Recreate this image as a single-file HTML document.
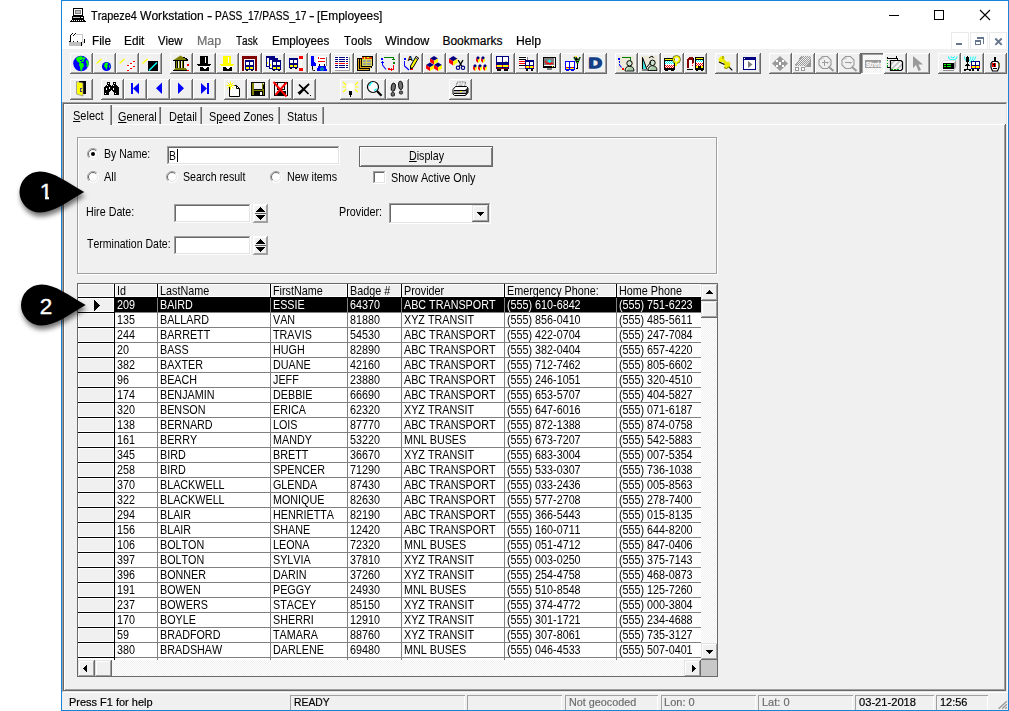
<!DOCTYPE html><html><head><meta charset="utf-8"><title>Trapeze4 Workstation</title><style>
*{box-sizing:border-box;margin:0;padding:0}
html,body{width:1009px;height:711px;overflow:hidden;background:#fff}
body{position:relative;font-family:"Liberation Sans",sans-serif;color:#000;font-kerning:none}
.a{position:absolute}
#win{left:61px;top:0;width:948px;height:711px;border:1px solid #1883d7;background:#f0f0f0}
#cap{left:62px;top:1px;width:946px;height:48px;background:#fff}
.seg{font-size:12px;line-height:14px;white-space:nowrap;transform-origin:0 0;-webkit-text-stroke:.2px currentColor}
.ms{font-size:13px;line-height:15px;white-space:nowrap;transform-origin:0 0}
.ar{font-size:11px;line-height:13px;white-space:nowrap;transform-origin:0 0;-webkit-text-stroke:.2px currentColor}
u{text-decoration:underline;text-underline-offset:1px;text-decoration-thickness:1px}
.tb{width:23px;height:21px;box-shadow:inset -1px -1px 0 #696969,inset 1px 1px 0 #fff,inset -2px -2px 0 #a0a0a0}
.tb>svg{position:absolute;left:0;top:0;width:23px;height:21px;overflow:hidden}
.tb.dn{box-shadow:inset -1px -1px 0 #fff,inset 1px 1px 0 #696969,inset 2px 2px 0 #a0a0a0}
.sunk{background:#fff;box-shadow:inset -1px -1px 0 #fff,inset 1px 1px 0 #a0a0a0,inset -2px -2px 0 #e3e3e3,inset 2px 2px 0 #696969}
.btn3{background:#f0f0f0;box-shadow:inset -1px -1px 0 #696969,inset 1px 1px 0 #e3e3e3,inset -2px -2px 0 #a0a0a0,inset 2px 2px 0 #fff}
.radio{width:12px;height:12px;border-radius:50%;background:#fff;box-shadow:inset 1px 1px 0 #a0a0a0,inset 2px 2px 0 #696969,inset -1px -1px 0 #fff,inset -2px -2px 0 #e3e3e3}
.dith{background:conic-gradient(#fff 25%,#f0f0f0 0 50%,#fff 0 75%,#f0f0f0 0) 0 0/2px 2px}
.pane{top:695px;height:15px;box-shadow:inset 1px 1px 0 #a0a0a0,inset -1px 0 0 #fff}
.hc{background:#f0f0f0;box-shadow:inset 1px 1px 0 #fff,inset -1px -1px 0 #fff}
.gl{background:#808080}
.bl{background:#000}
.cell{height:14px;overflow:hidden}
</style></head><body><div id="win" class="a"></div><div id="cap" class="a"></div>
<svg class="a" style="left:69px;top:7px" width="18" height="16" viewBox="0 0 18 16" shape-rendering="crispEdges"><rect x="4" y="1" width="10" height="8" fill="#000"/><rect x="5" y="2" width="8" height="6" fill="#fff"/><rect x="6" y="3" width="6" height="4" fill="#808080"/><rect x="7" y="4" width="4" height="2" fill="#c0c0c0"/><rect x="3" y="9" width="12" height="3" fill="#000"/><rect x="4" y="10" width="7" height="1" fill="#c0c0c0"/><rect x="12" y="10" width="2" height="1" fill="#fff"/><rect x="3" y="12" width="12" height="1" fill="#000"/><rect x="2" y="13" width="14" height="1" fill="#000"/><rect x="1" y="14" width="16" height="1" fill="#000"/><rect x="3" y="13" width="1" height="1" fill="#fff"/><rect x="5" y="13" width="1" height="1" fill="#fff"/><rect x="7" y="13" width="1" height="1" fill="#fff"/><rect x="9" y="13" width="1" height="1" fill="#fff"/><rect x="11" y="13" width="1" height="1" fill="#fff"/><rect x="13" y="13" width="1" height="1" fill="#fff"/></svg>
<div class="a seg" style="left:91.46px;top:9px;transform:scaleX(0.9047);">Trapeze4</div>
<div class="a seg" style="left:140.25px;top:9px;transform:scaleX(1.0061);">Workstation</div>
<div class="a seg" style="left:207.39px;top:9px;transform:scaleX(1.3312);">-</div>
<div class="a seg" style="left:215.16px;top:9px;transform:scaleX(0.8514);">PASS_17/PASS_17</div>
<div class="a seg" style="left:308.95px;top:9px;transform:scaleX(1.3995);">-</div>
<div class="a seg" style="left:316.85px;top:9px;transform:scaleX(0.9904);">[Employees]</div>
<svg class="a" style="left:880px;top:1px" width="128" height="30" viewBox="880 1 128 30" shape-rendering="crispEdges" fill="none" stroke="#000" stroke-width="1"><path d="M889 15.5h10"/><rect x="934.5" y="10.5" width="9" height="9"/></svg>
<svg class="a" style="left:978px;top:8px" width="14" height="14" viewBox="978 8 14 14" fill="none" stroke="#000" stroke-width="1.1"><path d="M980 10l10 10M990 10l-10 10"/></svg>
<svg class="a" style="left:0;top:0" width="100" height="50" viewBox="0 0 100 50" shape-rendering="crispEdges"><rect x="70" y="35" width="1" height="7" fill="#000"/><rect x="69" y="41" width="2" height="1" fill="#000"/><rect x="71" y="34" width="1" height="1" fill="#000"/><rect x="72" y="33" width="1" height="1" fill="#000"/><rect x="73" y="35" width="1" height="1" fill="#000"/><rect x="74" y="34" width="1" height="1" fill="#000"/><rect x="75" y="33" width="1" height="1" fill="#000"/><rect x="73" y="41" width="1" height="1" fill="#000"/><rect x="77" y="41" width="1" height="1" fill="#000"/><rect x="76" y="34" width="7" height="1" fill="#c8c8c8"/><rect x="82" y="34" width="1" height="8" fill="#c8c8c8"/><rect x="69" y="42" width="12" height="4" fill="#c0c0c0"/><rect x="81" y="42" width="1" height="4" fill="#000"/><rect x="84" y="39" width="1" height="4" fill="#000"/><rect x="82" y="42" width="1" height="3" fill="#dcdcdc"/><rect x="83" y="41" width="1" height="3" fill="#dcdcdc"/></svg>
<div class="a seg mn" style="left:91.53px;top:34px;transform:scaleX(0.9821);">File</div>
<div class="a seg mn" style="left:123.53px;top:34px;transform:scaleX(0.9844);">Edit</div>
<div class="a seg mn" style="left:157.95px;top:34px;transform:scaleX(0.9428);">View</div>
<div class="a seg mn" style="left:196.98px;top:34px;transform:scaleX(1.0341);color:#6d6d6d;">Map</div>
<div class="a seg mn" style="left:235.77px;top:34px;transform:scaleX(0.8349);">Task</div>
<div class="a seg mn" style="left:272.05px;top:34px;transform:scaleX(0.9647);">Employees</div>
<div class="a seg mn" style="left:343.54px;top:34px;transform:scaleX(0.9567);">Tools</div>
<div class="a seg mn" style="left:384.75px;top:34px;transform:scaleX(1.0385);">Window</div>
<div class="a seg mn" style="left:442.42px;top:34px;transform:scaleX(1.0000);">Bookmarks</div>
<div class="a seg mn" style="left:516.00px;top:34px;transform:scaleX(1.0176);">Help</div>
<div class="a " style="left:951px;top:32px;width:18px;height:18px;background:#fff;border:1px solid #e9e9e9"></div>
<div class="a " style="left:970px;top:32px;width:18px;height:18px;background:#fff;border:1px solid #e9e9e9"></div>
<div class="a " style="left:989px;top:32px;width:18px;height:18px;background:#fff;border:1px solid #e9e9e9"></div>
<svg class="a" style="left:951px;top:32px" width="56" height="18" viewBox="951 32 56 18" shape-rendering="crispEdges"><rect x="956" y="43" width="6" height="2" fill="#66768c"/><path d="M977.5 38.500h6v5" stroke="#66768c" fill="none"/><rect x="977" y="37" width="7" height="2" fill="#66768c"/><rect x="975.500" y="41.500" width="5" height="3" stroke="#66768c" fill="#fff"/><rect x="975" y="40" width="6" height="2" fill="#66768c"/></svg>
<svg class="a" style="left:993px;top:36px" width="11" height="11" viewBox="993 36 11 11" fill="none" stroke="#66768c" stroke-width="1.9"><path d="M995.300 38.500l6.400 6.400M1001.700 38.500l-6.400 6.400"/></svg>
<div class="a tb" style="left:70px;top:53px"><svg viewBox="0 0 23 21"><circle cx="11" cy="10.500" r="7.800" fill="#0000ff"/><path d="M6 5.500L8.500 3.600L12 3.300L13 5L14 4L15.500 5L14 7L13.200 9L11.500 8.500L11 10L13 10L13.500 11L14 13L12.500 15L12 17.800L10.500 17.800L10 14L9 12L9.500 10L8 9L6.500 7.500z" fill="#00ff00" /><path d="M16.500 6.500L18 8L18.800 10.500L18 13.500L16.500 14L16.800 11L16 9z" fill="#00ff00" /><g shape-rendering="crispEdges"><rect x="12" y="6" width="1" height="1" fill="#0000ff"/><rect x="10" y="7" width="2" height="1" fill="#0000ff"/></g></svg></div>
<div class="a tb" style="left:93px;top:53px"><svg viewBox="0 0 23 21"><path d="M3.500 10.500L8.500 6" fill="none" stroke="#ffff00" stroke-width="1.2" /><g shape-rendering="crispEdges"><rect x="9" y="4" width="1" height="1" fill="#fff"/><rect x="11" y="3" width="1" height="1" fill="#fff"/><rect x="12" y="5" width="1" height="1" fill="#fff"/><rect x="10" y="6" width="1" height="1" fill="#fff"/><rect x="13" y="4" width="1" height="1" fill="#fff"/></g><circle cx="13.500" cy="13.500" r="4.600" fill="#0000ff"/><path d="M12 10l2.500-.5 1 1.500-1.500 1 1 1.500-1 1 0 2.500-1.500-2-1.500-2zM16.500 11.500l1 1.500-.5 2-1-1z" fill="#00ff00" /></svg></div>
<div class="a tb" style="left:116px;top:53px"><svg viewBox="0 0 23 21"><path d="M3.500 10.500L8.500 6" fill="none" stroke="#ffff00" stroke-width="1.2" /><g shape-rendering="crispEdges"><rect x="9" y="4" width="1" height="1" fill="#fff"/><rect x="11" y="3" width="1" height="1" fill="#fff"/><rect x="12" y="5" width="1" height="1" fill="#fff"/><rect x="10" y="6" width="1" height="1" fill="#fff"/><rect x="13" y="4" width="1" height="1" fill="#fff"/></g><path d="M11 13l7-4.500v4l-7 4.500z" fill="#fff" /><g shape-rendering="crispEdges"><rect x="11" y="12" width="2" height="1" fill="#ff0000"/><rect x="14" y="10" width="2" height="1" fill="#ff0000"/><rect x="17" y="8" width="2" height="1" fill="#ff0000"/><rect x="11" y="17" width="2" height="1" fill="#ff0000"/><rect x="14" y="15" width="2" height="1" fill="#ff0000"/><rect x="17" y="13" width="2" height="1" fill="#ff0000"/></g></svg></div>
<div class="a tb" style="left:139px;top:53px"><svg viewBox="0 0 23 21"><path d="M3.500 10.500L8.500 6" fill="none" stroke="#ffff00" stroke-width="1.2" /><g shape-rendering="crispEdges"><rect x="9" y="4" width="1" height="1" fill="#fff"/><rect x="11" y="3" width="1" height="1" fill="#fff"/><rect x="12" y="5" width="1" height="1" fill="#fff"/><rect x="10" y="6" width="1" height="1" fill="#fff"/><rect x="13" y="4" width="1" height="1" fill="#fff"/></g><g shape-rendering="crispEdges"><rect x="9" y="8" width="10" height="10" fill="#000"/></g><path d="M10 17.500L18 9.500" fill="none" stroke="#00ffff" stroke-width="1.5" /></svg></div>
<div class="a tb" style="left:170px;top:53px"><svg viewBox="0 0 23 21"><path d="M10.500 2.500L17.500 7H3.500z" fill="#808000" /><g shape-rendering="crispEdges"><rect x="3" y="7" width="15" height="1" fill="#000"/><rect x="13" y="4" width="2" height="1" fill="#000"/><rect x="15" y="5" width="2" height="1" fill="#000"/><rect x="16" y="6" width="2" height="1" fill="#000"/><rect x="5" y="8" width="11" height="7" fill="#f4f4e8"/><rect x="6" y="8" width="1" height="7" fill="#808000"/><rect x="7" y="8" width="1" height="7" fill="#000"/><rect x="9" y="8" width="1" height="7" fill="#808000"/><rect x="10" y="8" width="1" height="7" fill="#000"/><rect x="12" y="8" width="1" height="7" fill="#808000"/><rect x="13" y="8" width="1" height="7" fill="#000"/><rect x="5" y="8" width="1" height="7" fill="#000"/><rect x="5" y="15" width="11" height="1" fill="#808000"/><rect x="4" y="16" width="13" height="1" fill="#808000"/><rect x="3" y="17" width="15" height="1" fill="#000"/><rect x="17" y="11" width="2" height="2" fill="#ff0000"/><rect x="17" y="17" width="2" height="1" fill="#ff0000"/></g></svg></div>
<div class="a tb" style="left:193px;top:53px"><svg viewBox="0 0 23 21"><g shape-rendering="crispEdges"><rect x="7" y="3" width="8" height="8" fill="#000"/><rect x="12" y="4" width="1" height="6" fill="#fff"/><rect x="4" y="11" width="14" height="1" fill="#000"/><rect x="5" y="12" width="12" height="1" fill="#000"/><rect x="6" y="13" width="11" height="2" fill="#fff"/><rect x="9" y="15" width="5" height="2" fill="#fff"/><path d="M7 14h2l2.500 2.500 2.500-2.500h2v4h-9z" fill="#000" /></g></svg></div>
<div class="a tb" style="left:216px;top:53px"><svg viewBox="0 0 23 21"><g shape-rendering="crispEdges"><rect x="7" y="3" width="8" height="8" fill="#ffff00"/><rect x="12" y="4" width="1" height="6" fill="#fff"/><rect x="4" y="11" width="14" height="1" fill="#ffff00"/><rect x="5" y="12" width="12" height="1" fill="#ffff00"/><rect x="6" y="13" width="11" height="2" fill="#fff"/><rect x="9" y="15" width="5" height="2" fill="#fff"/><path d="M7 14h2l2.500 2.500 2.500-2.500h2v4h-9z" fill="#000" /></g></svg></div>
<div class="a tb" style="left:239px;top:53px"><svg viewBox="0 0 23 21"><g shape-rendering="crispEdges"><rect x="3" y="3" width="15" height="15" fill="#800000"/><rect x="5" y="6" width="11" height="12" fill="#f0f0f0"/><rect x="6" y="7" width="9" height="10" fill="#000080"/><rect x="7" y="9" width="3.0" height="3.0" fill="#fff"/><rect x="11.0" y="9" width="3.0" height="3.0" fill="#fff"/><rect x="7" y="14" width="3.0" height="2" fill="#ffff00"/><rect x="11.0" y="14" width="3.0" height="2" fill="#ffff00"/><rect x="7" y="17" width="2" height="1" fill="#000"/><rect x="12" y="17" width="2" height="1" fill="#000"/></g></svg></div>
<div class="a tb" style="left:262px;top:53px"><svg viewBox="0 0 23 21"><g shape-rendering="crispEdges"><rect x="4" y="3" width="9" height="11" fill="#000080"/><rect x="5" y="5" width="2" height="8" fill="#fff"/><rect x="5" y="9" width="1" height="2" fill="#ffff00"/><rect x="7" y="5" width="9" height="11" fill="#000080"/><rect x="8" y="7" width="2" height="8" fill="#fff"/><rect x="8" y="11" width="1" height="2" fill="#ffff00"/><rect x="10" y="7" width="9" height="10" fill="#000080"/><rect x="11" y="9" width="3.0" height="3.0" fill="#fff"/><rect x="15.0" y="9" width="3.0" height="3.0" fill="#fff"/><rect x="11" y="14" width="3.0" height="2" fill="#ffff00"/><rect x="15.0" y="14" width="3.0" height="2" fill="#ffff00"/><rect x="11" y="17" width="2" height="1" fill="#000"/><rect x="16" y="17" width="2" height="1" fill="#000"/></g></svg></div>
<div class="a tb" style="left:285px;top:53px"><svg viewBox="0 0 23 21"><g shape-rendering="crispEdges"><rect x="14" y="3" width="4" height="3" fill="#ff0000"/><rect x="14" y="15" width="4" height="3" fill="#ff0000"/><rect x="14" y="6" width="3" height="9" fill="#fff"/><rect x="4" y="5" width="9" height="10" fill="#000080"/><rect x="5" y="7" width="3.0" height="3.0" fill="#fff"/><rect x="9.0" y="7" width="3.0" height="3.0" fill="#fff"/><rect x="5" y="12" width="3.0" height="2" fill="#ffff00"/><rect x="9.0" y="12" width="3.0" height="2" fill="#ffff00"/><rect x="5" y="15" width="2" height="1" fill="#000"/><rect x="10" y="15" width="2" height="1" fill="#000"/></g></svg></div>
<div class="a tb" style="left:308px;top:53px"><svg viewBox="0 0 23 21"><g shape-rendering="crispEdges"><rect x="8" y="3" width="11" height="10" fill="#fff"/><rect x="18" y="4" width="1" height="9" fill="#808080"/><rect x="3" y="3" width="3" height="10" fill="#0000ff"/><path d="M6 9l2 2v2h-2z" fill="#0000ff" /><rect x="10" y="4" width="1" height="2" fill="#ff0000"/><rect x="12" y="5" width="5" height="1" fill="#ff0000"/><rect x="10" y="8" width="7" height="1" fill="#ff0000"/><rect x="11" y="11" width="1" height="2" fill="#000"/><rect x="16" y="11" width="1" height="2" fill="#000"/><path d="M10 13h8l1 5h-10z" fill="#0000ff" /></g><path d="M4.500 13v3.500q0 1 1 1h1.500" fill="none" stroke="#000" stroke-width="1" /><circle cx="14" cy="16" r="1.800" fill="#00c0c0"/><circle cx="14" cy="16" r=".8" fill="#004040"/></svg></div>
<div class="a tb" style="left:331px;top:53px"><svg viewBox="0 0 23 21"><g shape-rendering="crispEdges"><rect x="3" y="3" width="15" height="14" fill="#fff"/><rect x="18" y="4" width="1" height="14" fill="#a0a0a0"/><rect x="4" y="17" width="15" height="1" fill="#a0a0a0"/><rect x="4" y="4" width="3" height="1" fill="#000080"/><rect x="8" y="4" width="6" height="1" fill="#000080"/><rect x="15" y="4" width="2" height="1" fill="#000080"/><rect x="4" y="6" width="3" height="1" fill="#000080"/><rect x="8" y="6" width="6" height="1" fill="#000080"/><rect x="15" y="6" width="2" height="1" fill="#000080"/><rect x="4" y="8" width="3" height="1" fill="#000080"/><rect x="8" y="8" width="6" height="1" fill="#000080"/><rect x="15" y="8" width="2" height="1" fill="#000080"/><rect x="4" y="10" width="3" height="1" fill="#ff0000"/><rect x="8" y="10" width="6" height="1" fill="#ff0000"/><rect x="15" y="10" width="2" height="1" fill="#ff0000"/><rect x="4" y="12" width="3" height="1" fill="#000080"/><rect x="8" y="12" width="6" height="1" fill="#000080"/><rect x="15" y="12" width="2" height="1" fill="#000080"/><rect x="4" y="14" width="3" height="1" fill="#000080"/><rect x="8" y="14" width="6" height="1" fill="#000080"/><rect x="15" y="14" width="2" height="1" fill="#000080"/></g></svg></div>
<div class="a tb" style="left:354px;top:53px"><svg viewBox="0 0 23 21"><g shape-rendering="crispEdges"><path d="M3 5h5v-2h11v10h-1v2h-2v3h-13z" fill="#000" /><rect x="4" y="6" width="1" height="11" fill="#daa520"/><rect x="4" y="16" width="11" height="1" fill="#daa520"/><rect x="6" y="6" width="1" height="9" fill="#daa520"/><rect x="6" y="14" width="11" height="1" fill="#daa520"/><rect x="8" y="4" width="10" height="9" fill="#d8d850"/><rect x="8" y="4" width="10" height="2" fill="#e04000"/><rect x="10" y="4" width="1" height="2" fill="#ffff00"/><rect x="13" y="4" width="2" height="1" fill="#ffff00"/><rect x="9" y="7" width="3" height="5" fill="#a0a0a0"/><rect x="13" y="7" width="4" height="5" fill="#a0a0a0"/><rect x="9" y="9" width="8" height="1" fill="#d8d850"/></g></svg></div>
<div class="a tb" style="left:377px;top:53px"><svg viewBox="0 0 23 21"><g shape-rendering="crispEdges"><rect x="4" y="5" width="2" height="2" fill="#0000ff"/><rect x="7" y="4" width="10" height="1" fill="#008000"/><rect x="16" y="5" width="1" height="2" fill="#008000"/><rect x="15" y="6" width="3" height="1" fill="#008000"/><rect x="16" y="9" width="2" height="2" fill="#008000"/><rect x="16" y="12" width="1" height="4" fill="#ff0000"/><rect x="13" y="16" width="4" height="1" fill="#ff0000"/><rect x="14" y="15" width="1" height="3" fill="#ff0000"/><rect x="11" y="15" width="2" height="2" fill="#ff0000"/><rect x="5" y="9" width="1" height="3" fill="#0000ff"/><rect x="4" y="9" width="3" height="1" fill="#0000ff"/><rect x="5" y="8" width="1" height="1" fill="#0000ff"/></g><path d="M5.500 12L9 16.500" fill="none" stroke="#0000ff" stroke-width="1.1" /></svg></div>
<div class="a tb" style="left:400px;top:53px"><svg viewBox="0 0 23 21"><g shape-rendering="crispEdges"><rect x="4" y="5" width="2" height="2" fill="#0000ff"/><rect x="4" y="8" width="1" height="5" fill="#0000ff"/><rect x="10" y="15" width="3" height="2" fill="#ff0000"/></g><text x="7.600" y="8.200" font-family="Liberation Sans, sans-serif" font-size="7.500" font-weight="bold" fill="#000">A</text><path d="M4.500 13L9 17" fill="none" stroke="#0000ff" stroke-width="1.1" /><path d="M16 3.500l2.500 1.500-5.500 9.500-2.500 1.500 0-3z" fill="#ffff00" stroke="#000" stroke-width="1"/><path d="M16 3.500l2.500 1.500-.8 1.400-2.500-1.500z" fill="#fff" stroke="#000" stroke-width=".8"/><path d="M10.500 16l0-2 1.700 1z" fill="#000" /></svg></div>
<div class="a tb" style="left:423px;top:53px"><svg viewBox="0 0 23 21"><path d="M11.0 3L15 5.380000000000001L11.0 7.760000000000001L7 5.380000000000001z" fill="#000080" /><path d="M7 5.380000000000001L11.0 7.760000000000001L11.0 11.5L7 9.12z" fill="#ff0000" /><path d="M15 5.380000000000001L11.0 7.760000000000001L11.0 11.5L15 9.12z" fill="#ffff00" /><path d="M7.0 9.5L11 11.88L7.0 14.260000000000002L3 11.88z" fill="#000080" /><path d="M3 11.88L7.0 14.260000000000002L7.0 18.0L3 15.62z" fill="#ff0000" /><path d="M11 11.88L7.0 14.260000000000002L7.0 18.0L11 15.62z" fill="#ffff00" /><path d="M15.0 9.5L19 11.88L15.0 14.260000000000002L11 11.88z" fill="#000080" /><path d="M11 11.88L15.0 14.260000000000002L15.0 18.0L11 15.62z" fill="#ff0000" /><path d="M19 11.88L15.0 14.260000000000002L15.0 18.0L19 15.62z" fill="#ffff00" /></svg></div>
<div class="a tb" style="left:446px;top:53px"><svg viewBox="0 0 23 21"><path d="M7.25 3L11.5 5.66L7.25 8.32L3 5.66z" fill="#000080" /><path d="M3 5.66L7.25 8.32L7.25 12.5L3 9.84z" fill="#ff0000" /><path d="M11.5 5.66L7.25 8.32L7.25 12.5L11.5 9.84z" fill="#ffff00" /><path d="M12.200 7.200L16 13.500M17 7.200L13.200 13.500" fill="none" stroke="#000" stroke-width="1.3" /><circle cx="12" cy="14.800" r="1.700" fill="none" stroke="#000080" stroke-width="1.100"/><circle cx="17" cy="14.800" r="1.700" fill="none" stroke="#000080" stroke-width="1.100"/></svg></div>
<div class="a tb" style="left:469px;top:53px"><svg viewBox="0 0 23 21"><path d="M9.0 3L11 4.96L9.0 6.92L7 4.96z" fill="#000080" /><path d="M7 4.96L9.0 6.92L9.0 10L7 8.04z" fill="#ff0000" /><path d="M11 4.96L9.0 6.92L9.0 10L11 8.04z" fill="#ffff00" /><path d="M14.0 3L16 4.96L14.0 6.92L12 4.96z" fill="#000080" /><path d="M12 4.96L14.0 6.92L14.0 10L12 8.04z" fill="#ff0000" /><path d="M16 4.96L14.0 6.92L14.0 10L16 8.04z" fill="#ffff00" /><path d="M6.0 11L8 12.96L6.0 14.92L4 12.96z" fill="#000080" /><path d="M4 12.96L6.0 14.92L6.0 18L4 16.04z" fill="#ff0000" /><path d="M8 12.96L6.0 14.92L6.0 18L8 16.04z" fill="#ffff00" /><path d="M11.0 11L13 12.96L11.0 14.92L9 12.96z" fill="#000080" /><path d="M9 12.96L11.0 14.92L11.0 18L9 16.04z" fill="#ff0000" /><path d="M13 12.96L11.0 14.92L11.0 18L13 16.04z" fill="#ffff00" /><path d="M16.0 11L18 12.96L16.0 14.92L14 12.96z" fill="#000080" /><path d="M14 12.96L16.0 14.92L16.0 18L14 16.04z" fill="#ff0000" /><path d="M18 12.96L16.0 14.92L16.0 18L18 16.04z" fill="#ffff00" /></svg></div>
<div class="a tb" style="left:492px;top:53px"><svg viewBox="0 0 23 21"><g shape-rendering="crispEdges"><rect x="4" y="3" width="13" height="13" fill="#000080"/><rect x="5" y="4" width="5" height="5" fill="#fff"/><rect x="11" y="4" width="5" height="5" fill="#fff"/><rect x="13" y="8" width="2" height="1" fill="#c0c0c0"/><rect x="4" y="12" width="13" height="2" fill="#ff0000"/><rect x="5" y="12" width="5" height="2" fill="#ffff00"/><rect x="11" y="12" width="5" height="2" fill="#ffff00"/><rect x="5" y="15" width="11" height="1" fill="#800000"/><rect x="5" y="16" width="4" height="2" fill="#000"/><rect x="12" y="16" width="4" height="2" fill="#000"/></g></svg></div>
<div class="a tb" style="left:515px;top:53px"><svg viewBox="0 0 23 21"><g shape-rendering="crispEdges"><rect x="4" y="3" width="8" height="13" fill="#fff"/><rect x="4" y="4" width="7" height="1" fill="#000"/><rect x="4" y="6" width="7" height="1" fill="#000"/><rect x="4" y="8" width="7" height="1" fill="#ff0000"/><rect x="4" y="10" width="7" height="1" fill="#ff0000"/><rect x="4" y="12" width="7" height="1" fill="#000"/><rect x="4" y="15" width="7" height="1" fill="#a0a0a0"/><rect x="12" y="4" width="1" height="3" fill="#808080"/><rect x="10" y="7" width="9" height="9" fill="#000080"/><rect x="11" y="9" width="3" height="3" fill="#fff"/><rect x="15" y="9" width="3" height="3" fill="#fff"/><rect x="10" y="13" width="9" height="2" fill="#ff0000"/><rect x="11" y="13" width="3" height="2" fill="#ffff00"/><rect x="15" y="13" width="3" height="2" fill="#ffff00"/><rect x="11" y="16" width="2" height="2" fill="#000"/><rect x="16" y="16" width="2" height="2" fill="#000"/></g></svg></div>
<div class="a tb" style="left:538px;top:53px"><svg viewBox="0 0 23 21"><g shape-rendering="crispEdges"><rect x="5" y="4" width="13" height="11" fill="#000"/><rect x="6" y="5" width="10" height="7" fill="#808080"/><rect x="16" y="5" width="1" height="9" fill="#e8e8e8"/><rect x="6" y="12" width="10" height="1" fill="#fff"/><rect x="14" y="13" width="1" height="1" fill="#ffff00"/><rect x="9" y="15" width="5" height="2" fill="#808080"/></g><path d="M11.500 6.500l1.800 1.800-1.800 1.800-1.800-1.800z" fill="#00ffff" /><path d="M7 8l2 3 1.500-1 1.500 1.500 1.500-1.500 1.500 1" fill="none" stroke="#ff0000" stroke-width="1.2" /></svg></div>
<div class="a tb" style="left:561px;top:53px"><svg viewBox="0 0 23 21"><g shape-rendering="crispEdges"><rect x="4" y="8" width="10" height="9" fill="#0000ff"/><rect x="5" y="9" width="3" height="5" fill="#fff"/><rect x="9" y="9" width="4" height="5" fill="#fff"/><rect x="5" y="14" width="2" height="1" fill="#ff0000"/><rect x="10" y="14" width="2" height="1" fill="#ff0000"/><rect x="5" y="15" width="3" height="1" fill="#ffff00"/><rect x="9" y="15" width="4" height="1" fill="#ffff00"/><rect x="5" y="17" width="3" height="1" fill="#0000ff"/><rect x="10" y="17" width="3" height="1" fill="#0000ff"/><rect x="16" y="9" width="1" height="7" fill="#000"/><rect x="15" y="15" width="2" height="1" fill="#000"/><rect x="14" y="3" width="2" height="1" fill="#ffff00"/></g><path d="M16.500 10L13 4M16.500 10L19 4M16.500 7L15 4.500" fill="none" stroke="#000" stroke-width="1.6" /><path d="M16.500 10L13 4M16.500 10L19 4" fill="none" stroke="#00ff00" stroke-width="1" stroke-dasharray="1 1.500"/></svg></div>
<div class="a tb" style="left:584px;top:53px"><svg viewBox="0 0 23 21"><text transform="translate(4.600,15.300) scale(1.250,1)" font-family="Liberation Sans, sans-serif" font-size="15" font-weight="bold" fill="#123f86" stroke="#123f86" stroke-width="1.400" stroke-linejoin="round">D</text></svg></div>
<div class="a tb" style="left:615px;top:53px"><svg viewBox="0 0 23 21"><g shape-rendering="crispEdges"><rect x="3" y="3" width="16" height="15" fill="#ece9d8"/><rect x="3" y="5" width="2" height="2" fill="#0000ff"/><rect x="4" y="8" width="1" height="2" fill="#0000ff"/><rect x="4" y="11" width="1" height="1" fill="#0000ff"/><rect x="7" y="15" width="2" height="2" fill="#ff0000"/><rect x="7" y="4" width="9" height="1" fill="#008000"/><rect x="15" y="5" width="1" height="3" fill="#008000"/></g><path d="M4.500 12L6.500 14.500" fill="none" stroke="#0000ff" stroke-width="1.1" /><path d="M10 18C10 14.5 12 13.3 14.5 13.3C17 13.3 19 14.5 19 18z" fill="#a6c8a6" stroke="#000" stroke-width=".9"/><circle cx="14.5" cy="10.3" r="2.700" fill="#cfe2cf" stroke="#000" stroke-width="1"/><path d="M11.5 17.5C11.5 15.5 13 14.5 14.5 14.5" fill="none" stroke="#d8ead8" stroke-width="1"/></svg></div>
<div class="a tb" style="left:638px;top:53px"><svg viewBox="0 0 23 21"><g shape-rendering="crispEdges"><rect x="3" y="3" width="16" height="15" fill="#ece9d8"/></g><path d="M4.500 4.500V16.500H9z" fill="#40e0e0" stroke="#000" stroke-width="1"/><g shape-rendering="crispEdges"><rect x="4" y="16" width="6" height="2" fill="#808080"/></g><path d="M10 17.5C10 14.0 12 12.8 14.5 12.8C17 12.8 19 14.0 19 17.5z" fill="#a6c8a6" stroke="#000" stroke-width=".9"/><circle cx="14.5" cy="9.8" r="2.700" fill="#cfe2cf" stroke="#000" stroke-width="1"/><path d="M11.5 17.0C11.5 15.0 13 14.0 14.5 14.0" fill="none" stroke="#d8ead8" stroke-width="1"/><path d="M11 5l3-2 1.500 2M9 14l4-5" fill="none" stroke="#000" stroke-width="1" /></svg></div>
<div class="a tb" style="left:661px;top:53px"><svg viewBox="0 0 23 21"><g shape-rendering="crispEdges"><rect x="3" y="5" width="11" height="12" fill="#000"/><rect x="4" y="6" width="9" height="1" fill="#ffff00"/><rect x="4" y="8" width="9" height="3" fill="#fff"/><rect x="4" y="8" width="1" height="1" fill="#00ffff"/><rect x="6" y="8" width="1" height="1" fill="#00ffff"/><rect x="8" y="8" width="1" height="1" fill="#00ffff"/><rect x="10" y="8" width="1" height="1" fill="#00ffff"/><rect x="12" y="8" width="1" height="1" fill="#00ffff"/><rect x="5" y="9" width="1" height="1" fill="#00ffff"/><rect x="7" y="9" width="1" height="1" fill="#00ffff"/><rect x="9" y="9" width="1" height="1" fill="#00ffff"/><rect x="11" y="9" width="1" height="1" fill="#00ffff"/><rect x="4" y="10" width="1" height="1" fill="#00ffff"/><rect x="6" y="10" width="1" height="1" fill="#00ffff"/><rect x="8" y="10" width="1" height="1" fill="#00ffff"/><rect x="10" y="10" width="1" height="1" fill="#00ffff"/><rect x="12" y="10" width="1" height="1" fill="#00ffff"/><rect x="4" y="11" width="9" height="1" fill="#fff"/><rect x="4" y="12" width="9" height="3" fill="#fff"/><rect x="4" y="12" width="1" height="1" fill="#ff0000"/><rect x="6" y="12" width="1" height="1" fill="#ff0000"/><rect x="8" y="12" width="1" height="1" fill="#ff0000"/><rect x="10" y="12" width="1" height="1" fill="#ff0000"/><rect x="12" y="12" width="1" height="1" fill="#ff0000"/><rect x="5" y="13" width="1" height="1" fill="#ff0000"/><rect x="7" y="13" width="1" height="1" fill="#ff0000"/><rect x="9" y="13" width="1" height="1" fill="#ff0000"/><rect x="11" y="13" width="1" height="1" fill="#ff0000"/><rect x="4" y="14" width="1" height="1" fill="#ff0000"/><rect x="6" y="14" width="1" height="1" fill="#ff0000"/><rect x="8" y="14" width="1" height="1" fill="#ff0000"/><rect x="10" y="14" width="1" height="1" fill="#ff0000"/><rect x="12" y="14" width="1" height="1" fill="#ff0000"/><rect x="3" y="15" width="11" height="2" fill="#000"/><rect x="3" y="17" width="11" height="1" fill="#f0f0f0"/><rect x="4" y="17" width="3" height="1" fill="#000"/><rect x="10" y="17" width="3" height="1" fill="#000"/></g><circle cx="15.500" cy="6.500" r="3" fill="none" stroke="#ffff00" stroke-width="1.800"/><circle cx="15.500" cy="6.500" r="4" fill="none" stroke="#000" stroke-width=".5"/><g shape-rendering="crispEdges"><rect x="14" y="9" width="2" height="4" fill="#ffff00"/><rect x="13" y="11" width="1" height="2" fill="#000"/></g></svg></div>
<div class="a tb" style="left:684px;top:53px"><svg viewBox="0 0 23 21"><g shape-rendering="crispEdges"><path d="M3 15V6l2-2h3l2 2v4h-2V7H5v8z" fill="#800000" /><rect x="5" y="7" width="3" height="8" fill="#fff"/><rect x="8" y="10" width="1" height="1" fill="#ff0000"/><rect x="8" y="12" width="1" height="1" fill="#ff0000"/><rect x="3" y="16" width="6" height="1" fill="#000"/><rect x="9" y="5" width="1" height="2" fill="#000"/><rect x="11" y="4" width="9" height="13" fill="#000"/><rect x="12" y="5" width="7" height="1" fill="#ffff00"/><rect x="12" y="7" width="7" height="2" fill="#fff"/><rect x="12" y="7" width="1" height="1" fill="#00ffff"/><rect x="14" y="7" width="1" height="1" fill="#00ffff"/><rect x="16" y="7" width="1" height="1" fill="#00ffff"/><rect x="18" y="7" width="1" height="1" fill="#00ffff"/><rect x="13" y="8" width="1" height="1" fill="#00ffff"/><rect x="15" y="8" width="1" height="1" fill="#00ffff"/><rect x="17" y="8" width="1" height="1" fill="#00ffff"/><rect x="12" y="9" width="7" height="1" fill="#fff"/><rect x="12" y="10" width="7" height="3" fill="#fff"/><rect x="12" y="10" width="1" height="1" fill="#ff0000"/><rect x="14" y="10" width="1" height="1" fill="#ff0000"/><rect x="16" y="10" width="1" height="1" fill="#ff0000"/><rect x="18" y="10" width="1" height="1" fill="#ff0000"/><rect x="13" y="11" width="1" height="1" fill="#ff0000"/><rect x="15" y="11" width="1" height="1" fill="#ff0000"/><rect x="17" y="11" width="1" height="1" fill="#ff0000"/><rect x="12" y="12" width="1" height="1" fill="#ff0000"/><rect x="14" y="12" width="1" height="1" fill="#ff0000"/><rect x="16" y="12" width="1" height="1" fill="#ff0000"/><rect x="18" y="12" width="1" height="1" fill="#ff0000"/><rect x="12" y="13" width="2" height="2" fill="#ffff00"/><rect x="17" y="13" width="2" height="2" fill="#ffff00"/><rect x="12" y="17" width="2" height="1" fill="#000"/><rect x="17" y="17" width="2" height="1" fill="#000"/></g></svg></div>
<div class="a tb" style="left:715px;top:53px"><svg viewBox="0 0 23 21"><path d="M12 12L17.300 17.300" fill="none" stroke="#000" stroke-width="1.2" /><path d="M3.500 6l2-2.500 3-.5 1 1.500-.5 3-2.500 2-2.500-.5z" fill="#f0f000" /><path d="M8 3v3" fill="none" stroke="#808000" stroke-width="1" /><path d="M7 7l2-1 3 3 2-.5 1.500 2.500-1 3.500-3.500 1.500-2-1 .5-3z" fill="#e8e800" /><path d="M4 9l5.500 2.500" fill="none" stroke="#000" stroke-width="1.2" /><path d="M9 14.500l2.500 1 3-2" fill="none" stroke="#808000" stroke-width="1" /></svg></div>
<div class="a tb" style="left:738px;top:53px"><svg viewBox="0 0 23 21"><g shape-rendering="crispEdges"><rect x="5" y="4" width="13" height="13" fill="#000080"/><rect x="6" y="7" width="11" height="9" fill="#fff"/><rect x="6" y="5" width="1" height="1" fill="#fff"/></g><path d="M10 8v7l4.500-3.500z" fill="#808080" /></svg></div>
<div class="a tb" style="left:769px;top:53px"><svg viewBox="0 0 23 21"><path d="M11 3l8 7.500-8 7.500-8-7.500z" fill="#9a9a9a" /><g shape-rendering="crispEdges"><rect x="10" y="9" width="2" height="3" fill="#fff"/><rect x="7" y="7" width="2" height="2" fill="#fff"/><rect x="13" y="7" width="2" height="2" fill="#fff"/><rect x="7" y="12" width="2" height="2" fill="#fff"/><rect x="13" y="12" width="2" height="2" fill="#fff"/></g></svg></div>
<div class="a tb" style="left:792px;top:53px"><svg viewBox="0 0 23 21"><defs><pattern id="dg" width="2" height="2" patternUnits="userSpaceOnUse"><rect width="1" height="1" fill="#9a9a9a"/><rect x="1" y="1" width="1" height="1" fill="#9a9a9a"/></pattern></defs><path d="M9 3h10v11h-5l-2-1h-9v-1z" fill="url(#dg)" shape-rendering="crispEdges"/><path d="M19 4v10h-5l4-6z" fill="#9a9a9a" /><path d="M3.500 12.500L10 3.500" fill="none" stroke="#9a9a9a" stroke-width="1" /><g shape-rendering="crispEdges"><rect x="3" y="14" width="4" height="4" fill="#9a9a9a"/><rect x="4" y="15" width="2" height="2" fill="#fff"/><rect x="9" y="14" width="4" height="4" fill="#9a9a9a"/><rect x="10" y="15" width="2" height="2" fill="#fff"/></g></svg></div>
<div class="a tb" style="left:815px;top:53px"><svg viewBox="0 0 23 21"><path d="M7.500 3.500h5l3.500 3.500v5l-3.500 3.500h-5l-3.500-3.500v-5z" fill="#f0f0f0" stroke="#9a9a9a" stroke-width="1.100"/><path d="M14 14l4.500 4" fill="none" stroke="#9a9a9a" stroke-width="2" /><path d="M12 11l2.500-2.500" fill="none" stroke="#b0b0b0" stroke-width="0.8" /><path d="M6 6.500q1-1.500 3-1.500" fill="none" stroke="#b0b0b0" stroke-width="0.8" /><path d="M7 9.500h6" fill="none" stroke="#9a9a9a" stroke-width="1" /><path d="M9.500 7v6" fill="none" stroke="#9a9a9a" stroke-width="1" /></svg></div>
<div class="a tb" style="left:838px;top:53px"><svg viewBox="0 0 23 21"><path d="M7.500 3.500h5l3.500 3.500v5l-3.500 3.500h-5l-3.500-3.500v-5z" fill="#f0f0f0" stroke="#9a9a9a" stroke-width="1.100"/><path d="M14 14l4.500 4" fill="none" stroke="#9a9a9a" stroke-width="2" /><path d="M12 11l2.500-2.500" fill="none" stroke="#b0b0b0" stroke-width="0.8" /><path d="M6 6.500q1-1.500 3-1.500" fill="none" stroke="#b0b0b0" stroke-width="0.8" /><path d="M7 9.500h6" fill="none" stroke="#9a9a9a" stroke-width="1" /></svg></div>
<div class="a tb dn dith" style="left:861px;top:53px"><svg viewBox="0 0 23 21"><g shape-rendering="crispEdges"><rect x="4" y="7" width="16" height="8" fill="#9a9a9a"/></g><svg x="4" y="7" width="16" height="8" viewBox="4 7 16 8" overflow="hidden"><text x="5" y="13.900" font-family="Liberation Sans, sans-serif" font-size="6.500" font-weight="bold" fill="#fff" stroke="#fff" stroke-width=".3" textLength="20" lengthAdjust="spacingAndGlyphs">Stretch</text></svg></svg></div>
<div class="a tb" style="left:884px;top:53px"><svg viewBox="0 0 23 21"><g shape-rendering="crispEdges"><rect x="3" y="5" width="10" height="1" fill="#000"/><rect x="3" y="4" width="1" height="1" fill="#000"/><rect x="12" y="3" width="1" height="3" fill="#000"/><rect x="13" y="5" width="1" height="2" fill="#000"/><rect x="3" y="7" width="1" height="1" fill="#00a000"/><rect x="3" y="10" width="1" height="1" fill="#00a000"/><rect x="3" y="12" width="1" height="2" fill="#00a000"/><rect x="3" y="14" width="3" height="1" fill="#000"/></g><defs><pattern id="hs" width="4" height="4" patternUnits="userSpaceOnUse" patternTransform="rotate(45)"><rect width="4" height="4" fill="#fafafa"/><rect width="1.600" height="4" fill="#b8b8b8"/></pattern></defs><path d="M6.500 7.500h10.500l1.500 1.500v7l-1.500 1.500h-10.500z" fill="url(#hs)" stroke="#000" stroke-width="1.200"/><g shape-rendering="crispEdges"><rect x="7" y="16" width="2" height="1" fill="#00a000"/><rect x="10" y="16" width="2" height="1" fill="#00a000"/><rect x="13" y="16" width="2" height="1" fill="#00a000"/></g></svg></div>
<div class="a tb" style="left:907px;top:53px"><svg viewBox="0 0 23 21"><path d="M6 3v12l3-3 2.500 6 2.500-1-2.500-5.500h4.500z" fill="#9a9a9a" /></svg></div>
<div class="a tb" style="left:938px;top:53px"><svg viewBox="0 0 23 21"><path d="M10.500 3.500A4.250 3.300 0 0 0 19 3.500M13 3.500A1.750 1.300 0 0 0 16.500 3.500" fill="none" stroke="#00ffff" stroke-width="1" /><path d="M4 10l2-2.500h12v6.500l-2 3h-12z" fill="#fff" stroke="#d0d0d0" stroke-width=".6"/><path d="M16 17l2-3v-6.500l-2 2.500z" fill="#a0a0a0" /><path d="M5 17.500h11" fill="none" stroke="#909090" stroke-width="1" /><g shape-rendering="crispEdges"><rect x="5" y="10" width="11" height="6" fill="#000"/><rect x="6" y="11" width="2" height="1" fill="#00ff00"/><rect x="9" y="11" width="4" height="1" fill="#00ff00"/><rect x="6" y="13" width="2" height="1" fill="#00ff00"/><rect x="9" y="13" width="4" height="1" fill="#00ff00"/></g></svg></div>
<div class="a tb" style="left:961px;top:53px"><svg viewBox="0 0 23 21"><path d="M3.500 3.500A3.150 4.500 0 0 0 9.800 3.500M12.500 3.500Q12 7.500 8.500 9.500M14.800 3.500Q14 7 11.500 8.500" fill="none" stroke="#00ffff" stroke-width="0.9" /><g shape-rendering="crispEdges"><rect x="6" y="3" width="1" height="14" fill="#000"/><rect x="5" y="4" width="3" height="5" fill="#000"/><rect x="5" y="11" width="3" height="2" fill="#000"/><rect x="4" y="12" width="5" height="1" fill="#000"/><rect x="3" y="16" width="7" height="1" fill="#000"/><rect x="3" y="17" width="2" height="1" fill="#000"/><rect x="8" y="17" width="2" height="1" fill="#000"/><rect x="10" y="8" width="9" height="8" fill="#000080"/><rect x="11" y="9" width="3" height="3" fill="#fff"/><rect x="15" y="9" width="3" height="3" fill="#fff"/><rect x="10" y="13" width="9" height="2" fill="#ff0000"/><rect x="11" y="13" width="3" height="2" fill="#ffff00"/><rect x="15" y="13" width="3" height="2" fill="#ffff00"/><rect x="11" y="16" width="2" height="2" fill="#000"/><rect x="16" y="16" width="2" height="2" fill="#000"/></g></svg></div>
<div class="a tb" style="left:984px;top:53px"><svg viewBox="0 0 23 21"><g shape-rendering="crispEdges"><rect x="10" y="4" width="2" height="5" fill="#000"/></g><path d="M8.500 8.500h5l1.500 2v4l-1.500 3.500h-5l-1.500-3.500v-4z" fill="#fff" stroke="#000" stroke-width="1.200"/><g shape-rendering="crispEdges"><rect x="8" y="10" width="4" height="4" fill="#ff0000"/><rect x="10" y="10" width="1" height="4" fill="#000"/><rect x="9" y="11" width="1" height="1" fill="#000"/><rect x="15" y="10" width="1" height="3" fill="#808000"/><rect x="9" y="15" width="4" height="1" fill="#000"/></g></svg></div>
<div class="a tb" style="left:70px;top:79px"><svg viewBox="0 0 23 21"><g shape-rendering="crispEdges"><rect x="9" y="2" width="7" height="13" fill="#000"/></g><path d="M6.500 2.500l6.500 1.500v13l-6.500-2z" fill="#ffff00" stroke="#8080a0" stroke-width=".7"/><g shape-rendering="crispEdges"><rect x="10" y="9" width="2" height="1" fill="#404080"/><rect x="10" y="10" width="1" height="2" fill="#404080"/><rect x="10" y="12" width="2" height="1" fill="#404080"/></g></svg></div>
<div class="a tb" style="left:101px;top:79px"><svg viewBox="0 0 23 21"><g shape-rendering="crispEdges"><rect x="6" y="3" width="3" height="3" fill="#000"/><rect x="12" y="3" width="3" height="3" fill="#000"/><rect x="5" y="6" width="5" height="1" fill="#000"/><rect x="11" y="6" width="5" height="1" fill="#000"/><rect x="4" y="7" width="6" height="1" fill="#000"/><rect x="11" y="7" width="6" height="1" fill="#000"/><rect x="3" y="8" width="7" height="4" fill="#000"/><rect x="11" y="8" width="7" height="4" fill="#000"/><rect x="9" y="7" width="3" height="4" fill="#000"/><rect x="3" y="12" width="5" height="4" fill="#000"/><rect x="13" y="12" width="5" height="4" fill="#000"/><rect x="8" y="12" width="1" height="1" fill="#000"/><rect x="12" y="12" width="1" height="1" fill="#000"/><rect x="7" y="4" width="1" height="1" fill="#fff"/><rect x="13" y="4" width="1" height="1" fill="#fff"/><rect x="6" y="6" width="1" height="1" fill="#fff"/><rect x="12" y="6" width="1" height="1" fill="#fff"/><rect x="5" y="9" width="1" height="2" fill="#fff"/><rect x="8" y="8" width="1" height="2" fill="#fff"/><rect x="12" y="9" width="1" height="2" fill="#fff"/><rect x="4" y="14" width="1" height="1" fill="#fff"/><rect x="14" y="14" width="1" height="1" fill="#fff"/></g></svg></div>
<div class="a tb" style="left:124px;top:79px"><svg viewBox="0 0 23 21"><g shape-rendering="crispEdges"><rect x="7" y="4" width="2" height="11" fill="#0000ff"/></g><path d="M15 4v11l-6-5.500z" fill="#0000ff" /></svg></div>
<div class="a tb" style="left:147px;top:79px"><svg viewBox="0 0 23 21"><path d="M15 3.500v11.500l-6-5.750z" fill="#0000ff" /></svg></div>
<div class="a tb" style="left:170px;top:79px"><svg viewBox="0 0 23 21"><path d="M8 3.500v11.500l6-5.750z" fill="#0000ff" /></svg></div>
<div class="a tb" style="left:193px;top:79px"><svg viewBox="0 0 23 21"><g shape-rendering="crispEdges"><rect x="14" y="4" width="2" height="11" fill="#0000ff"/></g><path d="M8 4v11l6-5.500z" fill="#0000ff" /></svg></div>
<div class="a tb" style="left:224px;top:79px"><svg viewBox="0 0 23 21"><path d="M5.500 6.500h7l3 3v8h-10z" fill="#fff" stroke="#000" stroke-width="1"/><path d="M12.500 6.500v3h3" fill="none" stroke="#000" stroke-width="1" /><path d="M3.500 3.500l6 6M9.500 3.500l-6 6M6.500 2.500v8M2.500 6.500h8" fill="none" stroke="#ffff00" stroke-width="1" /><g shape-rendering="crispEdges"><rect x="6" y="6" width="1" height="1" fill="#ffffc0"/></g></svg></div>
<div class="a tb" style="left:247px;top:79px"><svg viewBox="0 0 23 21"><g shape-rendering="crispEdges"><rect x="4" y="3" width="14" height="14" fill="#000"/><rect x="5" y="4" width="12" height="12" fill="#808000"/><rect x="7" y="4" width="8" height="6" fill="#f0f0f0"/><rect x="7" y="10" width="8" height="1" fill="#000"/><rect x="7" y="12" width="9" height="4" fill="#000"/><rect x="13" y="13" width="2" height="3" fill="#fff"/><rect x="16" y="4" width="1" height="1" fill="#fff"/><rect x="16" y="6" width="1" height="4" fill="#000"/><rect x="5" y="16" width="12" height="1" fill="#000"/></g></svg></div>
<div class="a tb" style="left:270px;top:79px"><svg viewBox="0 0 23 21"><g shape-rendering="crispEdges"><rect x="4" y="3" width="14" height="14" fill="#000"/><rect x="5" y="4" width="12" height="12" fill="#f0f0f0"/><rect x="7" y="4" width="8" height="6" fill="#f0f0f0"/><rect x="7" y="4" width="1" height="7" fill="#000"/><rect x="14" y="4" width="1" height="7" fill="#000"/><rect x="7" y="10" width="8" height="1" fill="#000"/><rect x="7" y="12" width="9" height="4" fill="#000"/></g><path d="M3.500 3L16.500 17.500M16.500 3.500L5.500 16" fill="none" stroke="#ff0000" stroke-width="1.9" /></svg></div>
<div class="a tb" style="left:293px;top:79px"><svg viewBox="0 0 23 21"><path d="M4.500 13.500l2.200 2.500 10-10.500-1.200-1.200-8.500 7.500z" fill="#000" /><path d="M6 5.500L15.500 15" fill="none" stroke="#000" stroke-width="1.7" /><g shape-rendering="crispEdges"><rect x="17" y="16" width="1" height="1" fill="#000"/></g></svg></div>
<div class="a tb" style="left:340px;top:79px"><svg viewBox="0 0 23 21"><path d="M3 3l3 3M18 3l-3 3M2.500 8h3.500M15 8h3.500M3 13l3-2.500M18 13l-3-2.500" fill="none" stroke="#ffff00" stroke-width="1.2" /><circle cx="10.500" cy="7.800" r="3.800" fill="#fff"/><g shape-rendering="crispEdges"><rect x="9" y="12" width="3" height="4" fill="#000"/><rect x="10" y="16" width="1" height="2" fill="#000"/></g></svg></div>
<div class="a tb" style="left:363px;top:79px"><svg viewBox="0 0 23 21"><circle cx="10" cy="8" r="5.500" fill="#fff" stroke="#000" stroke-width="1.200"/><path d="M6.500 7q.5-3 3-3.500M11 11.500q2-.5 2.500-2" fill="none" stroke="#00ffff" stroke-width="1.2" /><path d="M14 12l4.500 4.800" fill="none" stroke="#000" stroke-width="2.2" /></svg></div>
<div class="a tb" style="left:386px;top:79px"><svg viewBox="0 0 23 21"><ellipse cx="7.300" cy="8.200" rx="2.100" ry="4.200" fill="#707070" stroke="#000" stroke-width=".9" transform="rotate(8 7.300 8.200)"/><rect x="5.200" y="13.500" width="3.300" height="3.600" rx="1.200" fill="#707070" stroke="#000" stroke-width=".8"/><ellipse cx="14.600" cy="6.400" rx="2.100" ry="4.200" fill="#707070" stroke="#000" stroke-width=".9" transform="rotate(-4 14.600 6.400)"/><rect x="13.400" y="12" width="3.200" height="3" rx="1.200" fill="#707070" stroke="#000" stroke-width=".8"/></svg></div>
<div class="a tb" style="left:449px;top:79px"><svg viewBox="0 0 23 21"><path d="M7 8l1.500-5h8l-1 5z" fill="#fff" stroke="#000" stroke-width=".7" stroke-dasharray="1 .6"/><path d="M9.500 5h5M9.500 6.500h4" fill="none" stroke="#909090" stroke-width="0.7" /><path d="M4 10.500l2.500-3h11l1.500 1.500v4.500l-2.500 3h-11l-1.500-1.500z" fill="#fff" stroke="#000" stroke-width="1"/><path d="M16.500 10.500l2.500-2v5l-2.500 3z" fill="#202020" /><g shape-rendering="crispEdges"><rect x="5" y="11" width="12" height="1" fill="#000"/><rect x="5" y="12" width="12" height="2" fill="#b0b0b0"/><rect x="11" y="12" width="2" height="1" fill="#ffff00"/><rect x="5" y="14" width="12" height="1" fill="#000"/><rect x="6" y="15" width="10" height="1" fill="#fff"/></g></svg></div>
<div class="a " style="left:62px;top:102px;width:946px;height:591px;box-shadow:inset -1px -1px 0 #fff,inset 1px 1px 0 #a0a0a0,inset -2px -2px 0 #e3e3e3,inset 2px 2px 0 #696969"></div>
<div class="a " style="left:64px;top:124px;width:942px;height:567px;box-shadow:inset -1px -1px 0 #696969,inset 1px 0 0 #fff,inset 0 1px 0 #fff,inset -2px -2px 0 #a0a0a0"></div>
<div class="a " style="left:64px;top:104px;width:48px;height:21px;background:#f0f0f0;box-shadow:inset 1px 1px 0 #fff,inset -1px 0 0 #696969,inset -2px 0 0 #a0a0a0"></div>
<div class="a " style="left:112px;top:106px;width:49px;height:18px;box-shadow:inset 0 1px 0 #fff,inset -1px 0 0 #696969,inset -2px 0 0 #a0a0a0"></div>
<div class="a " style="left:161px;top:106px;width:41px;height:18px;box-shadow:inset 0 1px 0 #fff,inset -1px 0 0 #696969,inset -2px 0 0 #a0a0a0"></div>
<div class="a " style="left:202px;top:106px;width:78px;height:18px;box-shadow:inset 0 1px 0 #fff,inset -1px 0 0 #696969,inset -2px 0 0 #a0a0a0"></div>
<div class="a " style="left:280px;top:106px;width:44px;height:18px;box-shadow:inset 0 1px 0 #fff,inset -1px 0 0 #696969,inset -2px 0 0 #a0a0a0"></div>
<div class="a ms tabt" style="left:72.70px;top:108px;transform:scaleX(0.8464);"><u>S</u>elect</div>
<div class="a ms tabt" style="left:117.75px;top:109px;transform:scaleX(0.8362);"><u>G</u>eneral</div>
<div class="a ms tabt" style="left:168.70px;top:109px;transform:scaleX(0.8434);">D<u>e</u>tail</div>
<div class="a ms tabt" style="left:208.91px;top:109px;transform:scaleX(0.8378);">S<u>p</u>eed Zones</div>
<div class="a ms tabt" style="left:287.01px;top:109px;transform:scaleX(0.8242);">Status</div>
<div class="a " style="left:77px;top:137px;width:640px;height:137px;border:1px solid #a0a0a0;box-shadow:inset 1px 1px 0 #fff,1px 1px 0 #fff"></div>
<svg class="a" style="left:87px;top:148px" width="12" height="12" viewBox="0 0 12 12"><circle cx="6" cy="6" r="5.500" fill="#fff"/><path d="M2.100 9.900A5.500 5.500 0 0 1 9.900 2.100" fill="none" stroke="#a0a0a0" stroke-width="1"/><path d="M2.800 9.200A4.500 4.500 0 0 1 9.200 2.800" fill="none" stroke="#696969" stroke-width="1"/><path d="M2.100 9.900A5.500 5.500 0 0 0 9.900 2.100" fill="none" stroke="#fff" stroke-width="1"/><path d="M2.800 9.200A4.500 4.500 0 0 0 9.200 2.800" fill="none" stroke="#e3e3e3" stroke-width="1"/><circle cx="6" cy="6" r="2" fill="#000"/></svg>
<div class="a ms" style="left:103.54px;top:146px;transform:scaleX(0.8099);">By Name:</div>
<svg class="a" style="left:87px;top:171px" width="12" height="12" viewBox="0 0 12 12"><circle cx="6" cy="6" r="5.500" fill="#fff"/><path d="M2.100 9.900A5.500 5.500 0 0 1 9.900 2.100" fill="none" stroke="#a0a0a0" stroke-width="1"/><path d="M2.800 9.200A4.500 4.500 0 0 1 9.200 2.800" fill="none" stroke="#696969" stroke-width="1"/><path d="M2.100 9.900A5.500 5.500 0 0 0 9.900 2.100" fill="none" stroke="#fff" stroke-width="1"/><path d="M2.800 9.200A4.500 4.500 0 0 0 9.200 2.800" fill="none" stroke="#e3e3e3" stroke-width="1"/></svg>
<div class="a ms" style="left:104.08px;top:169px;transform:scaleX(0.8412);">All</div>
<svg class="a" style="left:166px;top:171px" width="12" height="12" viewBox="0 0 12 12"><circle cx="6" cy="6" r="5.500" fill="#fff"/><path d="M2.100 9.900A5.500 5.500 0 0 1 9.900 2.100" fill="none" stroke="#a0a0a0" stroke-width="1"/><path d="M2.800 9.200A4.500 4.500 0 0 1 9.200 2.800" fill="none" stroke="#696969" stroke-width="1"/><path d="M2.100 9.900A5.500 5.500 0 0 0 9.900 2.100" fill="none" stroke="#fff" stroke-width="1"/><path d="M2.800 9.200A4.500 4.500 0 0 0 9.200 2.800" fill="none" stroke="#e3e3e3" stroke-width="1"/></svg>
<div class="a ms" style="left:182.92px;top:169px;transform:scaleX(0.8142);">Search result</div>
<svg class="a" style="left:270px;top:171px" width="12" height="12" viewBox="0 0 12 12"><circle cx="6" cy="6" r="5.500" fill="#fff"/><path d="M2.100 9.900A5.500 5.500 0 0 1 9.900 2.100" fill="none" stroke="#a0a0a0" stroke-width="1"/><path d="M2.800 9.200A4.500 4.500 0 0 1 9.200 2.800" fill="none" stroke="#696969" stroke-width="1"/><path d="M2.100 9.900A5.500 5.500 0 0 0 9.900 2.100" fill="none" stroke="#fff" stroke-width="1"/><path d="M2.800 9.200A4.500 4.500 0 0 0 9.200 2.800" fill="none" stroke="#e3e3e3" stroke-width="1"/></svg>
<div class="a ms" style="left:286.62px;top:169px;transform:scaleX(0.8268);">New items</div>
<div class="a sunk" style="left:167px;top:146px;width:173px;height:19px;"></div>
<div class="a ms" style="left:169.45px;top:148px;transform:scaleX(0.8000);">B</div>
<div class="a bl" style="left:177px;top:149px;width:1px;height:13px;"></div>
<div class="a " style="left:359px;top:146px;width:134px;height:21px;background:#f0f0f0;border:1px solid #696969;box-shadow:inset 1px 1px 0 #fff,inset -1px -1px 0 #808080"></div>
<div class="a ms" style="left:408.52px;top:148px;transform:scaleX(0.8210);"><u>D</u>isplay</div>
<div class="a sunk" style="left:373px;top:171px;width:13px;height:13px;"></div>
<div class="a ms" style="left:391.01px;top:170px;transform:scaleX(0.8286);">Show Active Only</div>
<div class="a ms" style="left:86.02px;top:204px;transform:scaleX(0.8247);">Hire Date:</div>
<div class="a sunk" style="left:174px;top:204px;width:77px;height:19px;"></div>
<div class="a ms" style="left:86.76px;top:236px;transform:scaleX(0.8091);">Termination Date:</div>
<div class="a sunk" style="left:174px;top:236px;width:77px;height:19px;"></div>
<div class="a " style="left:253px;top:204px;width:15px;height:19px;background:#f0f0f0;box-shadow:inset -1px -1px 0 #a0a0a0,inset 1px 1px 0 #fff,inset -2px -2px 0 #a0a0a0,inset 2px 2px 0 #fff"></div>
<div class="a " style="left:253px;top:236px;width:15px;height:19px;background:#f0f0f0;box-shadow:inset -1px -1px 0 #a0a0a0,inset 1px 1px 0 #fff,inset -2px -2px 0 #a0a0a0,inset 2px 2px 0 #fff"></div>
<div class="a ms" style="left:339.42px;top:204px;transform:scaleX(0.8279);">Provider:</div>
<div class="a sunk" style="left:389px;top:203px;width:102px;height:21px;"></div>
<div class="a btn3" style="left:472px;top:205px;width:17px;height:17px;"></div>
<div class="a " style="left:77px;top:283px;width:641px;height:394px;background:#fff;border:1px solid #696969"></div>
<div class="a hc" style="left:78px;top:284px;width:623px;height:13px;"></div>
<div class="a " style="left:78px;top:284px;width:36px;height:373px;background:#f0f0f0"></div>
<div class="a hc" style="left:78px;top:284px;width:36px;height:13px;"></div>
<div class="a hc" style="left:115px;top:284px;width:42px;height:13px;"></div>
<div class="a hc" style="left:158px;top:284px;width:112px;height:13px;"></div>
<div class="a hc" style="left:271px;top:284px;width:76px;height:13px;"></div>
<div class="a hc" style="left:348px;top:284px;width:53px;height:13px;"></div>
<div class="a hc" style="left:402px;top:284px;width:102px;height:13px;"></div>
<div class="a hc" style="left:505px;top:284px;width:111px;height:13px;"></div>
<div class="a hc" style="left:617px;top:284px;width:84px;height:13px;"></div>
<div class="a bl" style="left:78px;top:297px;width:623px;height:1px;"></div>
<div class="a bl" style="left:114px;top:284px;width:1px;height:13px;"></div>
<div class="a bl" style="left:157px;top:284px;width:1px;height:13px;"></div>
<div class="a bl" style="left:270px;top:284px;width:1px;height:13px;"></div>
<div class="a bl" style="left:347px;top:284px;width:1px;height:13px;"></div>
<div class="a bl" style="left:401px;top:284px;width:1px;height:13px;"></div>
<div class="a bl" style="left:504px;top:284px;width:1px;height:13px;"></div>
<div class="a bl" style="left:616px;top:284px;width:1px;height:13px;"></div>
<div class="a ms hd" style="left:117.00px;top:283px;transform:scaleX(0.8300);">Id</div>
<div class="a ms hd" style="left:160.00px;top:283px;transform:scaleX(0.8300);">LastName</div>
<div class="a ms hd" style="left:273.00px;top:283px;transform:scaleX(0.8300);">FirstName</div>
<div class="a ms hd" style="left:350.00px;top:283px;transform:scaleX(0.8300);">Badge #</div>
<div class="a ms hd" style="left:404.00px;top:283px;transform:scaleX(0.8300);">Provider</div>
<div class="a ms hd" style="left:507.00px;top:283px;transform:scaleX(0.8300);">Emergency Phone:</div>
<div class="a ms hd" style="left:619.00px;top:283px;transform:scaleX(0.8300);">Home Phone</div>
<div class="a hc" style="left:78px;top:298px;width:36px;height:14px;"></div>
<div class="a bl" style="left:78px;top:312px;width:36px;height:1px;"></div>
<div class="a bl" style="left:115px;top:298px;width:586px;height:14px;"></div>
<div class="a gl" style="left:115px;top:312px;width:586px;height:1px;"></div>
<div class="a ms td" style="left:117.00px;top:297px;transform:scaleX(0.8280);color:#fff;">209</div>
<div class="a ms td" style="left:160.00px;top:297px;transform:scaleX(0.8280);color:#fff;">BAIRD</div>
<div class="a ms td" style="left:273.00px;top:297px;transform:scaleX(0.8280);color:#fff;">ESSIE</div>
<div class="a ms td" style="left:350.00px;top:297px;transform:scaleX(0.8280);color:#fff;">64370</div>
<div class="a ms td" style="left:404.00px;top:297px;transform:scaleX(0.8280);color:#fff;">ABC TRANSPORT</div>
<div class="a ms td" style="left:507.00px;top:297px;transform:scaleX(0.8280);color:#fff;">(555) 610-6842</div>
<div class="a ms td" style="left:619.00px;top:297px;transform:scaleX(0.8280);color:#fff;">(555) 751-6223</div>
<div class="a hc" style="left:78px;top:313px;width:36px;height:14px;"></div>
<div class="a bl" style="left:78px;top:327px;width:36px;height:1px;"></div>
<div class="a gl" style="left:115px;top:327px;width:586px;height:1px;"></div>
<div class="a ms td" style="left:117.00px;top:312px;transform:scaleX(0.8280);">135</div>
<div class="a ms td" style="left:160.00px;top:312px;transform:scaleX(0.8280);">BALLARD</div>
<div class="a ms td" style="left:273.00px;top:312px;transform:scaleX(0.8280);">VAN</div>
<div class="a ms td" style="left:350.00px;top:312px;transform:scaleX(0.8280);">81880</div>
<div class="a ms td" style="left:404.00px;top:312px;transform:scaleX(0.8280);">XYZ TRANSIT</div>
<div class="a ms td" style="left:507.00px;top:312px;transform:scaleX(0.8280);">(555) 856-0410</div>
<div class="a ms td" style="left:619.00px;top:312px;transform:scaleX(0.8280);">(555) 485-5611</div>
<div class="a hc" style="left:78px;top:328px;width:36px;height:14px;"></div>
<div class="a bl" style="left:78px;top:342px;width:36px;height:1px;"></div>
<div class="a gl" style="left:115px;top:342px;width:586px;height:1px;"></div>
<div class="a ms td" style="left:117.00px;top:327px;transform:scaleX(0.8280);">244</div>
<div class="a ms td" style="left:160.00px;top:327px;transform:scaleX(0.8280);">BARRETT</div>
<div class="a ms td" style="left:273.00px;top:327px;transform:scaleX(0.8280);">TRAVIS</div>
<div class="a ms td" style="left:350.00px;top:327px;transform:scaleX(0.8280);">54530</div>
<div class="a ms td" style="left:404.00px;top:327px;transform:scaleX(0.8280);">ABC TRANSPORT</div>
<div class="a ms td" style="left:507.00px;top:327px;transform:scaleX(0.8280);">(555) 422-0704</div>
<div class="a ms td" style="left:619.00px;top:327px;transform:scaleX(0.8280);">(555) 247-7084</div>
<div class="a hc" style="left:78px;top:343px;width:36px;height:14px;"></div>
<div class="a bl" style="left:78px;top:357px;width:36px;height:1px;"></div>
<div class="a gl" style="left:115px;top:357px;width:586px;height:1px;"></div>
<div class="a ms td" style="left:117.00px;top:342px;transform:scaleX(0.8280);">20</div>
<div class="a ms td" style="left:160.00px;top:342px;transform:scaleX(0.8280);">BASS</div>
<div class="a ms td" style="left:273.00px;top:342px;transform:scaleX(0.8280);">HUGH</div>
<div class="a ms td" style="left:350.00px;top:342px;transform:scaleX(0.8280);">82890</div>
<div class="a ms td" style="left:404.00px;top:342px;transform:scaleX(0.8280);">ABC TRANSPORT</div>
<div class="a ms td" style="left:507.00px;top:342px;transform:scaleX(0.8280);">(555) 382-0404</div>
<div class="a ms td" style="left:619.00px;top:342px;transform:scaleX(0.8280);">(555) 657-4220</div>
<div class="a hc" style="left:78px;top:358px;width:36px;height:14px;"></div>
<div class="a bl" style="left:78px;top:372px;width:36px;height:1px;"></div>
<div class="a gl" style="left:115px;top:372px;width:586px;height:1px;"></div>
<div class="a ms td" style="left:117.00px;top:357px;transform:scaleX(0.8280);">382</div>
<div class="a ms td" style="left:160.00px;top:357px;transform:scaleX(0.8280);">BAXTER</div>
<div class="a ms td" style="left:273.00px;top:357px;transform:scaleX(0.8280);">DUANE</div>
<div class="a ms td" style="left:350.00px;top:357px;transform:scaleX(0.8280);">42160</div>
<div class="a ms td" style="left:404.00px;top:357px;transform:scaleX(0.8280);">ABC TRANSPORT</div>
<div class="a ms td" style="left:507.00px;top:357px;transform:scaleX(0.8280);">(555) 712-7462</div>
<div class="a ms td" style="left:619.00px;top:357px;transform:scaleX(0.8280);">(555) 805-6602</div>
<div class="a hc" style="left:78px;top:373px;width:36px;height:14px;"></div>
<div class="a bl" style="left:78px;top:387px;width:36px;height:1px;"></div>
<div class="a gl" style="left:115px;top:387px;width:586px;height:1px;"></div>
<div class="a ms td" style="left:117.00px;top:372px;transform:scaleX(0.8280);">96</div>
<div class="a ms td" style="left:160.00px;top:372px;transform:scaleX(0.8280);">BEACH</div>
<div class="a ms td" style="left:273.00px;top:372px;transform:scaleX(0.8280);">JEFF</div>
<div class="a ms td" style="left:350.00px;top:372px;transform:scaleX(0.8280);">23880</div>
<div class="a ms td" style="left:404.00px;top:372px;transform:scaleX(0.8280);">ABC TRANSPORT</div>
<div class="a ms td" style="left:507.00px;top:372px;transform:scaleX(0.8280);">(555) 246-1051</div>
<div class="a ms td" style="left:619.00px;top:372px;transform:scaleX(0.8280);">(555) 320-4510</div>
<div class="a hc" style="left:78px;top:388px;width:36px;height:14px;"></div>
<div class="a bl" style="left:78px;top:402px;width:36px;height:1px;"></div>
<div class="a gl" style="left:115px;top:402px;width:586px;height:1px;"></div>
<div class="a ms td" style="left:117.00px;top:387px;transform:scaleX(0.8280);">174</div>
<div class="a ms td" style="left:160.00px;top:387px;transform:scaleX(0.8280);">BENJAMIN</div>
<div class="a ms td" style="left:273.00px;top:387px;transform:scaleX(0.8280);">DEBBIE</div>
<div class="a ms td" style="left:350.00px;top:387px;transform:scaleX(0.8280);">66690</div>
<div class="a ms td" style="left:404.00px;top:387px;transform:scaleX(0.8280);">ABC TRANSPORT</div>
<div class="a ms td" style="left:507.00px;top:387px;transform:scaleX(0.8280);">(555) 653-5707</div>
<div class="a ms td" style="left:619.00px;top:387px;transform:scaleX(0.8280);">(555) 404-5827</div>
<div class="a hc" style="left:78px;top:403px;width:36px;height:14px;"></div>
<div class="a bl" style="left:78px;top:417px;width:36px;height:1px;"></div>
<div class="a gl" style="left:115px;top:417px;width:586px;height:1px;"></div>
<div class="a ms td" style="left:117.00px;top:402px;transform:scaleX(0.8280);">320</div>
<div class="a ms td" style="left:160.00px;top:402px;transform:scaleX(0.8280);">BENSON</div>
<div class="a ms td" style="left:273.00px;top:402px;transform:scaleX(0.8280);">ERICA</div>
<div class="a ms td" style="left:350.00px;top:402px;transform:scaleX(0.8280);">62320</div>
<div class="a ms td" style="left:404.00px;top:402px;transform:scaleX(0.8280);">XYZ TRANSIT</div>
<div class="a ms td" style="left:507.00px;top:402px;transform:scaleX(0.8280);">(555) 647-6016</div>
<div class="a ms td" style="left:619.00px;top:402px;transform:scaleX(0.8280);">(555) 071-6187</div>
<div class="a hc" style="left:78px;top:418px;width:36px;height:14px;"></div>
<div class="a bl" style="left:78px;top:432px;width:36px;height:1px;"></div>
<div class="a gl" style="left:115px;top:432px;width:586px;height:1px;"></div>
<div class="a ms td" style="left:117.00px;top:417px;transform:scaleX(0.8280);">138</div>
<div class="a ms td" style="left:160.00px;top:417px;transform:scaleX(0.8280);">BERNARD</div>
<div class="a ms td" style="left:273.00px;top:417px;transform:scaleX(0.8280);">LOIS</div>
<div class="a ms td" style="left:350.00px;top:417px;transform:scaleX(0.8280);">87770</div>
<div class="a ms td" style="left:404.00px;top:417px;transform:scaleX(0.8280);">ABC TRANSPORT</div>
<div class="a ms td" style="left:507.00px;top:417px;transform:scaleX(0.8280);">(555) 872-1388</div>
<div class="a ms td" style="left:619.00px;top:417px;transform:scaleX(0.8280);">(555) 874-0758</div>
<div class="a hc" style="left:78px;top:433px;width:36px;height:14px;"></div>
<div class="a bl" style="left:78px;top:447px;width:36px;height:1px;"></div>
<div class="a gl" style="left:115px;top:447px;width:586px;height:1px;"></div>
<div class="a ms td" style="left:117.00px;top:432px;transform:scaleX(0.8280);">161</div>
<div class="a ms td" style="left:160.00px;top:432px;transform:scaleX(0.8280);">BERRY</div>
<div class="a ms td" style="left:273.00px;top:432px;transform:scaleX(0.8280);">MANDY</div>
<div class="a ms td" style="left:350.00px;top:432px;transform:scaleX(0.8280);">53220</div>
<div class="a ms td" style="left:404.00px;top:432px;transform:scaleX(0.8280);">MNL BUSES</div>
<div class="a ms td" style="left:507.00px;top:432px;transform:scaleX(0.8280);">(555) 673-7207</div>
<div class="a ms td" style="left:619.00px;top:432px;transform:scaleX(0.8280);">(555) 542-5883</div>
<div class="a hc" style="left:78px;top:448px;width:36px;height:14px;"></div>
<div class="a bl" style="left:78px;top:462px;width:36px;height:1px;"></div>
<div class="a gl" style="left:115px;top:462px;width:586px;height:1px;"></div>
<div class="a ms td" style="left:117.00px;top:447px;transform:scaleX(0.8280);">345</div>
<div class="a ms td" style="left:160.00px;top:447px;transform:scaleX(0.8280);">BIRD</div>
<div class="a ms td" style="left:273.00px;top:447px;transform:scaleX(0.8280);">BRETT</div>
<div class="a ms td" style="left:350.00px;top:447px;transform:scaleX(0.8280);">36670</div>
<div class="a ms td" style="left:404.00px;top:447px;transform:scaleX(0.8280);">XYZ TRANSIT</div>
<div class="a ms td" style="left:507.00px;top:447px;transform:scaleX(0.8280);">(555) 683-3004</div>
<div class="a ms td" style="left:619.00px;top:447px;transform:scaleX(0.8280);">(555) 007-5354</div>
<div class="a hc" style="left:78px;top:463px;width:36px;height:14px;"></div>
<div class="a bl" style="left:78px;top:477px;width:36px;height:1px;"></div>
<div class="a gl" style="left:115px;top:477px;width:586px;height:1px;"></div>
<div class="a ms td" style="left:117.00px;top:462px;transform:scaleX(0.8280);">258</div>
<div class="a ms td" style="left:160.00px;top:462px;transform:scaleX(0.8280);">BIRD</div>
<div class="a ms td" style="left:273.00px;top:462px;transform:scaleX(0.8280);">SPENCER</div>
<div class="a ms td" style="left:350.00px;top:462px;transform:scaleX(0.8280);">71290</div>
<div class="a ms td" style="left:404.00px;top:462px;transform:scaleX(0.8280);">ABC TRANSPORT</div>
<div class="a ms td" style="left:507.00px;top:462px;transform:scaleX(0.8280);">(555) 533-0307</div>
<div class="a ms td" style="left:619.00px;top:462px;transform:scaleX(0.8280);">(555) 736-1038</div>
<div class="a hc" style="left:78px;top:478px;width:36px;height:14px;"></div>
<div class="a bl" style="left:78px;top:492px;width:36px;height:1px;"></div>
<div class="a gl" style="left:115px;top:492px;width:586px;height:1px;"></div>
<div class="a ms td" style="left:117.00px;top:477px;transform:scaleX(0.8280);">370</div>
<div class="a ms td" style="left:160.00px;top:477px;transform:scaleX(0.8280);">BLACKWELL</div>
<div class="a ms td" style="left:273.00px;top:477px;transform:scaleX(0.8280);">GLENDA</div>
<div class="a ms td" style="left:350.00px;top:477px;transform:scaleX(0.8280);">87430</div>
<div class="a ms td" style="left:404.00px;top:477px;transform:scaleX(0.8280);">ABC TRANSPORT</div>
<div class="a ms td" style="left:507.00px;top:477px;transform:scaleX(0.8280);">(555) 033-2436</div>
<div class="a ms td" style="left:619.00px;top:477px;transform:scaleX(0.8280);">(555) 005-8563</div>
<div class="a hc" style="left:78px;top:493px;width:36px;height:14px;"></div>
<div class="a bl" style="left:78px;top:507px;width:36px;height:1px;"></div>
<div class="a gl" style="left:115px;top:507px;width:586px;height:1px;"></div>
<div class="a ms td" style="left:117.00px;top:492px;transform:scaleX(0.8280);">322</div>
<div class="a ms td" style="left:160.00px;top:492px;transform:scaleX(0.8280);">BLACKWELL</div>
<div class="a ms td" style="left:273.00px;top:492px;transform:scaleX(0.8280);">MONIQUE</div>
<div class="a ms td" style="left:350.00px;top:492px;transform:scaleX(0.8280);">82630</div>
<div class="a ms td" style="left:404.00px;top:492px;transform:scaleX(0.8280);">ABC TRANSPORT</div>
<div class="a ms td" style="left:507.00px;top:492px;transform:scaleX(0.8280);">(555) 577-2708</div>
<div class="a ms td" style="left:619.00px;top:492px;transform:scaleX(0.8280);">(555) 278-7400</div>
<div class="a hc" style="left:78px;top:508px;width:36px;height:14px;"></div>
<div class="a bl" style="left:78px;top:522px;width:36px;height:1px;"></div>
<div class="a gl" style="left:115px;top:522px;width:586px;height:1px;"></div>
<div class="a ms td" style="left:117.00px;top:507px;transform:scaleX(0.8280);">294</div>
<div class="a ms td" style="left:160.00px;top:507px;transform:scaleX(0.8280);">BLAIR</div>
<div class="a ms td" style="left:273.00px;top:507px;transform:scaleX(0.8280);">HENRIETTA</div>
<div class="a ms td" style="left:350.00px;top:507px;transform:scaleX(0.8280);">82190</div>
<div class="a ms td" style="left:404.00px;top:507px;transform:scaleX(0.8280);">ABC TRANSPORT</div>
<div class="a ms td" style="left:507.00px;top:507px;transform:scaleX(0.8280);">(555) 366-5443</div>
<div class="a ms td" style="left:619.00px;top:507px;transform:scaleX(0.8280);">(555) 015-8135</div>
<div class="a hc" style="left:78px;top:523px;width:36px;height:14px;"></div>
<div class="a bl" style="left:78px;top:537px;width:36px;height:1px;"></div>
<div class="a gl" style="left:115px;top:537px;width:586px;height:1px;"></div>
<div class="a ms td" style="left:117.00px;top:522px;transform:scaleX(0.8280);">156</div>
<div class="a ms td" style="left:160.00px;top:522px;transform:scaleX(0.8280);">BLAIR</div>
<div class="a ms td" style="left:273.00px;top:522px;transform:scaleX(0.8280);">SHANE</div>
<div class="a ms td" style="left:350.00px;top:522px;transform:scaleX(0.8280);">12420</div>
<div class="a ms td" style="left:404.00px;top:522px;transform:scaleX(0.8280);">ABC TRANSPORT</div>
<div class="a ms td" style="left:507.00px;top:522px;transform:scaleX(0.8280);">(555) 160-0711</div>
<div class="a ms td" style="left:619.00px;top:522px;transform:scaleX(0.8280);">(555) 644-8200</div>
<div class="a hc" style="left:78px;top:538px;width:36px;height:14px;"></div>
<div class="a bl" style="left:78px;top:552px;width:36px;height:1px;"></div>
<div class="a gl" style="left:115px;top:552px;width:586px;height:1px;"></div>
<div class="a ms td" style="left:117.00px;top:537px;transform:scaleX(0.8280);">106</div>
<div class="a ms td" style="left:160.00px;top:537px;transform:scaleX(0.8280);">BOLTON</div>
<div class="a ms td" style="left:273.00px;top:537px;transform:scaleX(0.8280);">LEONA</div>
<div class="a ms td" style="left:350.00px;top:537px;transform:scaleX(0.8280);">72320</div>
<div class="a ms td" style="left:404.00px;top:537px;transform:scaleX(0.8280);">MNL BUSES</div>
<div class="a ms td" style="left:507.00px;top:537px;transform:scaleX(0.8280);">(555) 051-4712</div>
<div class="a ms td" style="left:619.00px;top:537px;transform:scaleX(0.8280);">(555) 847-0406</div>
<div class="a hc" style="left:78px;top:553px;width:36px;height:14px;"></div>
<div class="a bl" style="left:78px;top:567px;width:36px;height:1px;"></div>
<div class="a gl" style="left:115px;top:567px;width:586px;height:1px;"></div>
<div class="a ms td" style="left:117.00px;top:552px;transform:scaleX(0.8280);">397</div>
<div class="a ms td" style="left:160.00px;top:552px;transform:scaleX(0.8280);">BOLTON</div>
<div class="a ms td" style="left:273.00px;top:552px;transform:scaleX(0.8280);">SYLVIA</div>
<div class="a ms td" style="left:350.00px;top:552px;transform:scaleX(0.8280);">37810</div>
<div class="a ms td" style="left:404.00px;top:552px;transform:scaleX(0.8280);">XYZ TRANSIT</div>
<div class="a ms td" style="left:507.00px;top:552px;transform:scaleX(0.8280);">(555) 003-0250</div>
<div class="a ms td" style="left:619.00px;top:552px;transform:scaleX(0.8280);">(555) 375-7143</div>
<div class="a hc" style="left:78px;top:568px;width:36px;height:14px;"></div>
<div class="a bl" style="left:78px;top:582px;width:36px;height:1px;"></div>
<div class="a gl" style="left:115px;top:582px;width:586px;height:1px;"></div>
<div class="a ms td" style="left:117.00px;top:567px;transform:scaleX(0.8280);">396</div>
<div class="a ms td" style="left:160.00px;top:567px;transform:scaleX(0.8280);">BONNER</div>
<div class="a ms td" style="left:273.00px;top:567px;transform:scaleX(0.8280);">DARIN</div>
<div class="a ms td" style="left:350.00px;top:567px;transform:scaleX(0.8280);">37260</div>
<div class="a ms td" style="left:404.00px;top:567px;transform:scaleX(0.8280);">XYZ TRANSIT</div>
<div class="a ms td" style="left:507.00px;top:567px;transform:scaleX(0.8280);">(555) 254-4758</div>
<div class="a ms td" style="left:619.00px;top:567px;transform:scaleX(0.8280);">(555) 468-0873</div>
<div class="a hc" style="left:78px;top:583px;width:36px;height:14px;"></div>
<div class="a bl" style="left:78px;top:597px;width:36px;height:1px;"></div>
<div class="a gl" style="left:115px;top:597px;width:586px;height:1px;"></div>
<div class="a ms td" style="left:117.00px;top:582px;transform:scaleX(0.8280);">191</div>
<div class="a ms td" style="left:160.00px;top:582px;transform:scaleX(0.8280);">BOWEN</div>
<div class="a ms td" style="left:273.00px;top:582px;transform:scaleX(0.8280);">PEGGY</div>
<div class="a ms td" style="left:350.00px;top:582px;transform:scaleX(0.8280);">24930</div>
<div class="a ms td" style="left:404.00px;top:582px;transform:scaleX(0.8280);">MNL BUSES</div>
<div class="a ms td" style="left:507.00px;top:582px;transform:scaleX(0.8280);">(555) 510-8548</div>
<div class="a ms td" style="left:619.00px;top:582px;transform:scaleX(0.8280);">(555) 125-7260</div>
<div class="a hc" style="left:78px;top:598px;width:36px;height:14px;"></div>
<div class="a bl" style="left:78px;top:612px;width:36px;height:1px;"></div>
<div class="a gl" style="left:115px;top:612px;width:586px;height:1px;"></div>
<div class="a ms td" style="left:117.00px;top:597px;transform:scaleX(0.8280);">237</div>
<div class="a ms td" style="left:160.00px;top:597px;transform:scaleX(0.8280);">BOWERS</div>
<div class="a ms td" style="left:273.00px;top:597px;transform:scaleX(0.8280);">STACEY</div>
<div class="a ms td" style="left:350.00px;top:597px;transform:scaleX(0.8280);">85150</div>
<div class="a ms td" style="left:404.00px;top:597px;transform:scaleX(0.8280);">XYZ TRANSIT</div>
<div class="a ms td" style="left:507.00px;top:597px;transform:scaleX(0.8280);">(555) 374-4772</div>
<div class="a ms td" style="left:619.00px;top:597px;transform:scaleX(0.8280);">(555) 000-3804</div>
<div class="a hc" style="left:78px;top:613px;width:36px;height:14px;"></div>
<div class="a bl" style="left:78px;top:627px;width:36px;height:1px;"></div>
<div class="a gl" style="left:115px;top:627px;width:586px;height:1px;"></div>
<div class="a ms td" style="left:117.00px;top:612px;transform:scaleX(0.8280);">170</div>
<div class="a ms td" style="left:160.00px;top:612px;transform:scaleX(0.8280);">BOYLE</div>
<div class="a ms td" style="left:273.00px;top:612px;transform:scaleX(0.8280);">SHERRI</div>
<div class="a ms td" style="left:350.00px;top:612px;transform:scaleX(0.8280);">12910</div>
<div class="a ms td" style="left:404.00px;top:612px;transform:scaleX(0.8280);">XYZ TRANSIT</div>
<div class="a ms td" style="left:507.00px;top:612px;transform:scaleX(0.8280);">(555) 301-1721</div>
<div class="a ms td" style="left:619.00px;top:612px;transform:scaleX(0.8280);">(555) 234-4688</div>
<div class="a hc" style="left:78px;top:628px;width:36px;height:14px;"></div>
<div class="a bl" style="left:78px;top:642px;width:36px;height:1px;"></div>
<div class="a gl" style="left:115px;top:642px;width:586px;height:1px;"></div>
<div class="a ms td" style="left:117.00px;top:627px;transform:scaleX(0.8280);">59</div>
<div class="a ms td" style="left:160.00px;top:627px;transform:scaleX(0.8280);">BRADFORD</div>
<div class="a ms td" style="left:273.00px;top:627px;transform:scaleX(0.8280);">TAMARA</div>
<div class="a ms td" style="left:350.00px;top:627px;transform:scaleX(0.8280);">88760</div>
<div class="a ms td" style="left:404.00px;top:627px;transform:scaleX(0.8280);">XYZ TRANSIT</div>
<div class="a ms td" style="left:507.00px;top:627px;transform:scaleX(0.8280);">(555) 307-8061</div>
<div class="a ms td" style="left:619.00px;top:627px;transform:scaleX(0.8280);">(555) 735-3127</div>
<div class="a hc" style="left:78px;top:643px;width:36px;height:14px;"></div>
<div class="a bl" style="left:78px;top:657px;width:36px;height:1px;"></div>
<div class="a gl" style="left:115px;top:657px;width:586px;height:1px;"></div>
<div class="a ms td" style="left:117.00px;top:642px;transform:scaleX(0.8280);">380</div>
<div class="a ms td" style="left:160.00px;top:642px;transform:scaleX(0.8280);">BRADSHAW</div>
<div class="a ms td" style="left:273.00px;top:642px;transform:scaleX(0.8280);">DARLENE</div>
<div class="a ms td" style="left:350.00px;top:642px;transform:scaleX(0.8280);">69480</div>
<div class="a ms td" style="left:404.00px;top:642px;transform:scaleX(0.8280);">MNL BUSES</div>
<div class="a ms td" style="left:507.00px;top:642px;transform:scaleX(0.8280);">(555) 046-4533</div>
<div class="a ms td" style="left:619.00px;top:642px;transform:scaleX(0.8280);">(555) 507-0401</div>
<div class="a bl" style="left:114px;top:298px;width:1px;height:362px;"></div>
<div class="a gl" style="left:157px;top:298px;width:1px;height:362px;"></div>
<div class="a gl" style="left:270px;top:298px;width:1px;height:362px;"></div>
<div class="a gl" style="left:347px;top:298px;width:1px;height:362px;"></div>
<div class="a gl" style="left:401px;top:298px;width:1px;height:362px;"></div>
<div class="a gl" style="left:504px;top:298px;width:1px;height:362px;"></div>
<div class="a gl" style="left:616px;top:298px;width:1px;height:362px;"></div>
<div class="a dith" style="left:701px;top:284px;width:16px;height:376px;"></div>
<div class="a btn3" style="left:701px;top:284px;width:17px;height:17px;"></div>
<div class="a btn3" style="left:701px;top:301px;width:17px;height:17px;"></div>
<div class="a btn3" style="left:701px;top:643px;width:17px;height:17px;"></div>
<div class="a dith" style="left:78px;top:660px;width:623px;height:16px;"></div>
<div class="a btn3" style="left:78px;top:660px;width:17px;height:17px;"></div>
<div class="a btn3" style="left:95px;top:660px;width:17px;height:17px;"></div>
<div class="a btn3" style="left:684px;top:660px;width:17px;height:17px;"></div>
<div class="a " style="left:701px;top:660px;width:16px;height:16px;background:#c8c8c8"></div>
<svg class="a" style="left:0;top:0" width="1009" height="711" viewBox="0 0 1009 711" shape-rendering="crispEdges"><rect x="260" y="207" width="1" height="1" fill="#000"/><rect x="259" y="208" width="3" height="1" fill="#000"/><rect x="258" y="209" width="5" height="1" fill="#000"/><rect x="257" y="210" width="7" height="1" fill="#000"/><rect x="256" y="211" width="9" height="1" fill="#000"/><rect x="255" y="213" width="11" height="1" fill="#606060"/><rect x="256" y="215" width="9" height="1" fill="#000"/><rect x="257" y="216" width="7" height="1" fill="#000"/><rect x="258" y="217" width="5" height="1" fill="#000"/><rect x="259" y="218" width="3" height="1" fill="#000"/><rect x="260" y="219" width="1" height="1" fill="#000"/><rect x="260" y="239" width="1" height="1" fill="#000"/><rect x="259" y="240" width="3" height="1" fill="#000"/><rect x="258" y="241" width="5" height="1" fill="#000"/><rect x="257" y="242" width="7" height="1" fill="#000"/><rect x="256" y="243" width="9" height="1" fill="#000"/><rect x="255" y="245" width="11" height="1" fill="#606060"/><rect x="256" y="247" width="9" height="1" fill="#000"/><rect x="257" y="248" width="7" height="1" fill="#000"/><rect x="258" y="249" width="5" height="1" fill="#000"/><rect x="259" y="250" width="3" height="1" fill="#000"/><rect x="260" y="251" width="1" height="1" fill="#000"/><rect x="477" y="212" width="7" height="1" fill="#000"/><rect x="478" y="213" width="5" height="1" fill="#000"/><rect x="479" y="214" width="3" height="1" fill="#000"/><rect x="480" y="215" width="1" height="1" fill="#000"/><rect x="94" y="300" width="1" height="11" fill="#000"/><rect x="95" y="301" width="1" height="9" fill="#000"/><rect x="96" y="302" width="1" height="7" fill="#000"/><rect x="97" y="303" width="1" height="5" fill="#000"/><rect x="98" y="304" width="1" height="3" fill="#000"/><rect x="99" y="305" width="1" height="1" fill="#000"/><rect x="709" y="290" width="1" height="1" fill="#000"/><rect x="708" y="291" width="3" height="1" fill="#000"/><rect x="707" y="292" width="5" height="1" fill="#000"/><rect x="706" y="293" width="7" height="1" fill="#000"/><rect x="706" y="650" width="7" height="1" fill="#000"/><rect x="707" y="651" width="5" height="1" fill="#000"/><rect x="708" y="652" width="3" height="1" fill="#000"/><rect x="709" y="653" width="1" height="1" fill="#000"/><rect x="83" y="668" width="1" height="1" fill="#000"/><rect x="84" y="667" width="1" height="3" fill="#000"/><rect x="85" y="666" width="1" height="5" fill="#000"/><rect x="86" y="665" width="1" height="7" fill="#000"/><rect x="692" y="665" width="1" height="7" fill="#000"/><rect x="693" y="666" width="1" height="5" fill="#000"/><rect x="694" y="667" width="1" height="3" fill="#000"/><rect x="695" y="668" width="1" height="1" fill="#000"/></svg>
<div class="a ar" style="left:68.50px;top:696px;transform:scaleX(0.9977);">Press F1 for help</div>
<div class="a pane" style="left:290px;top:695px;width:175px;height:15px;"></div>
<div class="a pane" style="left:467px;top:695px;width:95px;height:15px;"></div>
<div class="a pane" style="left:565px;top:695px;width:93px;height:15px;"></div>
<div class="a pane" style="left:661px;top:695px;width:95px;height:15px;"></div>
<div class="a pane" style="left:758px;top:695px;width:95px;height:15px;"></div>
<div class="a pane" style="left:855px;top:695px;width:79px;height:15px;"></div>
<div class="a pane" style="left:936px;top:695px;width:52px;height:15px;"></div>
<div class="a ar" style="left:293.55px;top:696px;transform:scaleX(0.9414);">READY</div>
<div class="a ar" style="left:569.12px;top:696px;transform:scaleX(0.9808);color:#6d6d6d">Not geocoded</div>
<div class="a ar" style="left:664.49px;top:696px;transform:scaleX(1.0051);color:#6d6d6d">Lon: 0</div>
<div class="a ar" style="left:761.70px;top:696px;transform:scaleX(1.0004);color:#6d6d6d">Lat: 0</div>
<div class="a ar" style="left:858.96px;top:696px;transform:scaleX(1.0134);">03-21-2018</div>
<div class="a ar" style="left:940.27px;top:696px;transform:scaleX(0.9960);">12:56</div>
<svg class="a" style="left:996px;top:698px" width="12" height="12" viewBox="0 0 12 12" stroke="#999" stroke-width="1.400"><path d="M2.600 10.700L10.800 3.300M6.200 10.700L10.800 6.300M9.200 10.700l1.600-1.400"/></svg>
<svg class="a" style="left:0;top:151.5px;overflow:visible" width="110" height="80" viewBox="0 151.5 110 80"><defs><filter id="sh1" x="-30%" y="-30%" width="160%" height="180%"><feGaussianBlur stdDeviation="2.500"/></filter></defs><path d="M40 171.0C54 171.0 68 182.5 84.2 191.5C68 200.5 54 212.0 40 212.0A20.5 20.5 0 0 1 40 171.0z" fill="#000" opacity=".55" filter="url(#sh1)" transform="translate(1,4)"/><path d="M40 171.0C54 171.0 68 182.5 84.2 191.5C68 200.5 54 212.0 40 212.0A20.5 20.5 0 0 1 40 171.0z" fill="#000"/></svg>
<div class="a" style="left:31.0px;top:179.0px;width:30px;text-align:center;font-size:22.5px;line-height:26px;color:#fff;-webkit-text-stroke:.4px #fff">1</div>
<div class="a bl" style="left:39.5px;top:196.7px;width:5px;height:3.3px;"></div>
<div class="a bl" style="left:48.5px;top:196.7px;width:4px;height:3.3px;"></div>
<svg class="a" style="left:0;top:265px;overflow:visible" width="110" height="80" viewBox="0 265 110 80"><defs><filter id="sh2" x="-30%" y="-30%" width="160%" height="180%"><feGaussianBlur stdDeviation="2.500"/></filter></defs><path d="M41.5 284.5C55.5 284.5 69.5 296 85.7 305C69.5 314 55.5 325.5 41.5 325.5A20.5 20.5 0 0 1 41.5 284.5z" fill="#000" opacity=".55" filter="url(#sh2)" transform="translate(1,4)"/><path d="M41.5 284.5C55.5 284.5 69.5 296 85.7 305C69.5 314 55.5 325.5 41.5 325.5A20.5 20.5 0 0 1 41.5 284.5z" fill="#000"/></svg>
<div class="a" style="left:31.0px;top:294.0px;width:30px;text-align:center;font-size:22.5px;line-height:26px;color:#fff;-webkit-text-stroke:.4px #fff">2</div></body></html>
